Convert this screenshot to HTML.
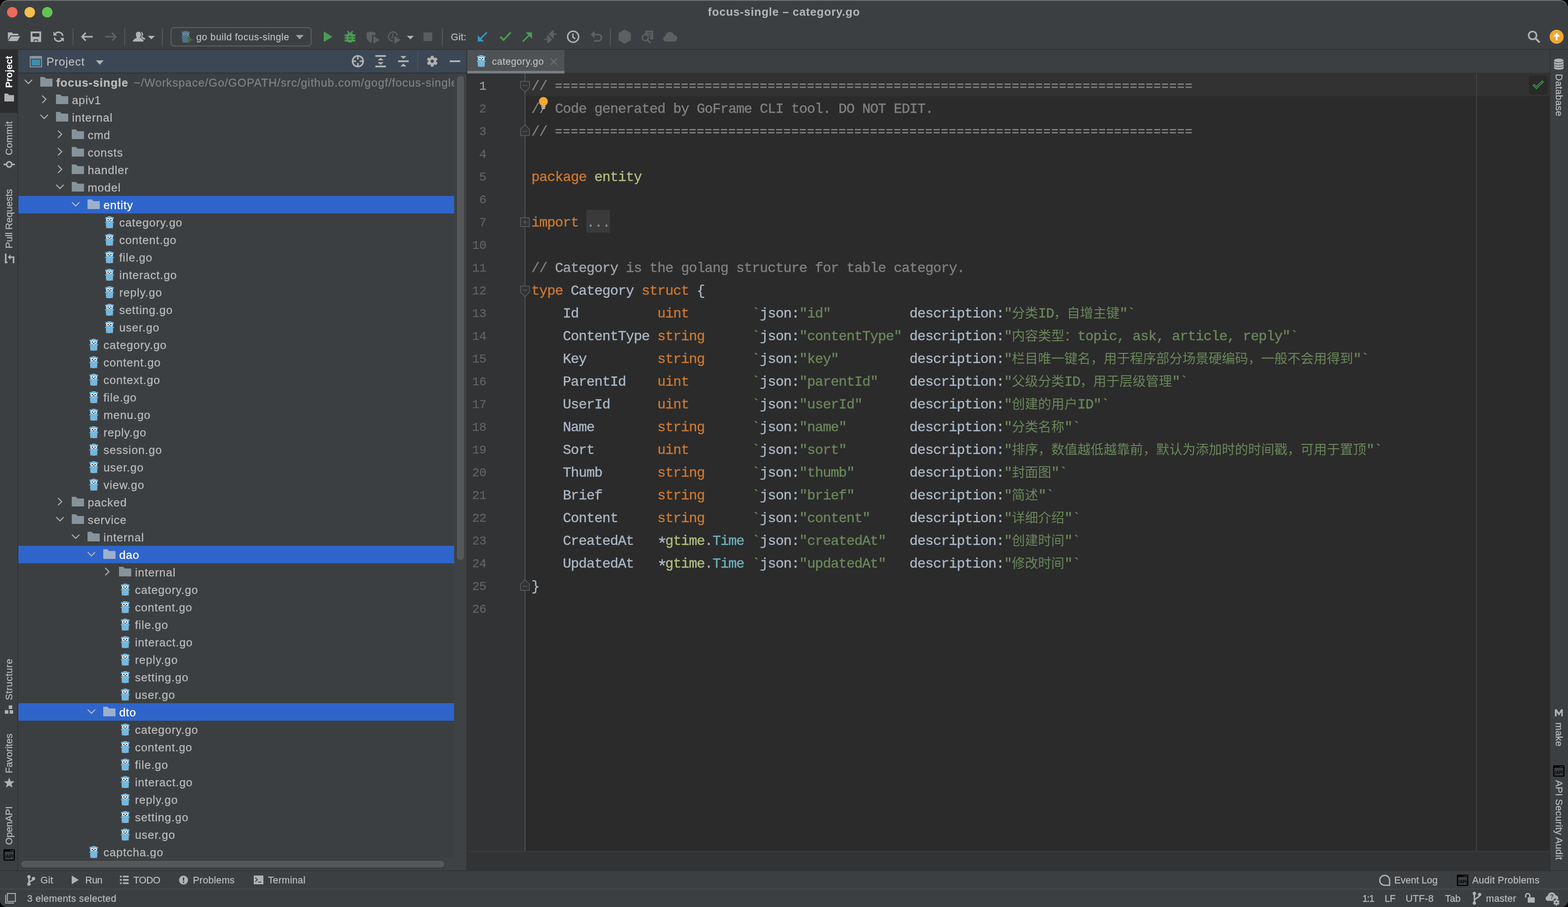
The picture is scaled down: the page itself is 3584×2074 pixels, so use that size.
<!DOCTYPE html>
<html><head><meta charset="utf-8"><title>focus-single – category.go</title>
<style>
html,body{margin:0;padding:0;background:#000;}
body{width:3584px;height:2074px;overflow:hidden;position:relative;font-family:"Liberation Sans",sans-serif;}
#win{position:absolute;left:0;top:0;width:3584px;height:2074px;background:#3C3F41;border-radius:20px 20px 15px 15px;overflow:hidden;box-shadow:inset 0 2px 0 0 #6E7072;will-change:transform;}
#win div,#win svg{position:absolute;}
.t{white-space:pre;color:#BBBBBB;font-size:26px;letter-spacing:1.0px;-webkit-text-stroke-width:0.3px;}
.s{font-size:22px;letter-spacing:0.35px;}
.b{font-weight:bold;}
.m{font-family:"Liberation Mono",monospace;font-size:32px;letter-spacing:-1.2px;color:#A9B7C6;-webkit-text-stroke-width:0.45px;}
.ln{font-family:"Liberation Mono",monospace;font-size:28px;letter-spacing:-0.6px;color:#606366;text-align:right;width:60px;}
.k{color:#CC7832} .c{color:#808080} .g{color:#6A8759} .p{color:#AFBF7E} .y{color:#6FAFBD} .d{color:#A9B7C6} .dc{color:#A1A7AE}
.cj{font-family:"Liberation Mono","Noto Sans CJK SC",monospace;font-size:30px;letter-spacing:0;color:#6A8759;-webkit-text-stroke-width:0;}
.rot{transform-origin:0 0;transform:rotate(90deg);}
.rotl{transform-origin:0 0;transform:rotate(-90deg);}
.code svg{position:static !important;display:inline-block;vertical-align:top;}
</style></head><body><div id="win">
<div style="left:16px;top:16px;width:24px;height:24px;background:#ED6A5E;border-radius:50%;"></div>
<div style="left:56px;top:16px;width:24px;height:24px;background:#F4BF4F;border-radius:50%;"></div>
<div style="left:96px;top:16px;width:24px;height:24px;background:#61C554;border-radius:50%;"></div>
<div class="t b" style="left:0px;top:8.5px;height:36px;line-height:36px;width:3584px;text-align:center;letter-spacing:0.78px;color:#B4B6B8;-webkit-text-stroke-width:0;">focus-single – category.go</div>
<svg style="left:17px;top:73px;" width="30" height="22" viewBox="0 0 30 22"><path d="M1 1H10L13 4H25V8H7L1 19Z" fill="#AFB1B3"/><path d="M8.5 10H29L22.5 21H1.5Z" fill="#AFB1B3"/></svg>
<svg style="left:69px;top:72px;" width="26" height="25" viewBox="0 0 26 25"><path fill-rule="evenodd" d="M1 0H25V24H1ZM5 4V12H21V4ZM8 18V24H18V18Z" fill="#AFB1B3"/><rect x="9.5" y="20" width="7" height="4" fill="#AFB1B3"/></svg>
<svg style="left:121px;top:71px;" width="26" height="26" viewBox="0 0 26 26"><path d="M22.5 11A9.8 9.8 0 0 0 4.6 7.2" fill="none" stroke="#AFB1B3" stroke-width="3.4"/><path d="M1 1.5V10.5H10Z" fill="#AFB1B3"/><path d="M3.5 15A9.8 9.8 0 0 0 21.4 18.8" fill="none" stroke="#AFB1B3" stroke-width="3.4"/><path d="M25 24.5V15.5H16Z" fill="#AFB1B3"/></svg>
<div style="left:166px;top:64px;width:2px;height:40px;background:#555555;"></div>
<svg style="left:185px;top:73px;" width="28" height="22" viewBox="0 0 28 22"><path d="M11 2L2.5 11L11 20M3 11H27" fill="none" stroke="#AFB1B3" stroke-width="3.6"/></svg>
<svg style="left:239px;top:73px;" width="28" height="22" viewBox="0 0 28 22"><path d="M17 2L25.5 11L17 20M25 11H1" fill="none" stroke="#5E6060" stroke-width="3.6"/></svg>
<div style="left:284px;top:64px;width:2px;height:40px;background:#555555;"></div>
<svg style="left:303px;top:72px;" width="30" height="24" viewBox="0 0 30 24"><path d="M19 1C22.5 1 24 3.5 24 6.5C24 9 23 10.5 22.3 11.8C23 13.5 29 14 29.5 18H24C23 15 20 14.6 19.3 13.4C20.5 11.6 21 9.5 21 7C21 4.6 20.3 2.8 19 1Z" fill="#AFB1B3"/><path d="M13.5 0.5C17.5 0.5 19.3 3.4 19.3 7C19.3 10 18 12 17.2 13.4C18 16 24.5 16 25.5 23H0.5C1.5 16 8.5 16 9.6 13.4C8.8 12 7.6 10 7.6 7C7.6 3.4 9.5 0.5 13.5 0.5Z" fill="#AFB1B3"/></svg>
<svg style="left:338px;top:82px;" width="16" height="8" viewBox="0 0 16 8"><path d="M0 0H16L8 8Z" fill="#AFB1B3"/></svg>
<div style="left:370px;top:64px;width:2px;height:40px;background:#555555;"></div>
<div style="left:390px;top:62px;width:322px;height:44px;box-sizing:border-box;border:2px solid #5E6162;border-radius:8px;"></div>
<svg style="left:414px;top:70px;" width="21" height="28" viewBox="0 0 21 29"><circle cx="2.8" cy="4.6" r="2.4" fill="#4F738A"/><circle cx="18.2" cy="4.6" r="2.4" fill="#4F738A"/><ellipse cx="1.4" cy="15" rx="1.3" ry="1.6" fill="#6b6560"/><ellipse cx="19.6" cy="15" rx="1.3" ry="1.6" fill="#6b6560"/><ellipse cx="3.8" cy="27" rx="1.6" ry="1.4" fill="#6b6560"/><ellipse cx="17.2" cy="27" rx="1.6" ry="1.4" fill="#6b6560"/><path d="M10.5 0.3C15.2 0.3 18.6 3.2 18.9 7.5C19.1 11 18.4 14 18.7 17.5C19 21 19.4 23.5 18 26C16.6 28 13.5 28.6 10.5 28.6C7.5 28.6 4.4 28 3 26C1.6 23.5 2 21 2.3 17.5C2.6 14 1.9 11 2.1 7.5C2.4 3.2 5.8 0.3 10.5 0.3Z" fill="#4F738A"/><circle cx="7" cy="8.4" r="3.3" fill="#8f9aa3"/><circle cx="14" cy="8.4" r="3.3" fill="#8f9aa3"/><circle cx="7.2" cy="8.5" r="1.35" fill="#2f3a42"/><circle cx="13.8" cy="8.5" r="1.35" fill="#2f3a42"/><rect x="9.5" y="12.2" width="2" height="2.3" rx="0.6" fill="#8f9aa3"/><ellipse cx="10.5" cy="12.4" rx="1.9" ry="1.0" fill="#6b6560"/><ellipse cx="10.5" cy="11.4" rx="1.2" ry="0.9" fill="#2f3a42"/></svg>
<svg style="left:429px;top:84px;" width="12" height="14" viewBox="0 0 12 14"><path d="M0 0L12 7L0 14Z" fill="#3C6E45"/></svg>
<div class="t s" style="left:448.5px;top:63px;height:44px;line-height:44px;letter-spacing:0.58px;">go build focus-single</div>
<svg style="left:675.5px;top:80px;" width="18" height="10" viewBox="0 0 18 10"><path d="M0 0H18L9 10Z" fill="#9C9FA1"/></svg>
<svg style="left:740px;top:72px;" width="20" height="24" viewBox="0 0 20 24"><path d="M0 0L20 12L0 24Z" fill="#499C54"/></svg>
<svg style="left:787px;top:70px;" width="26" height="28" viewBox="0 0 26 28"><path d="M7 1.2L11 6M19 1.2L15 6" stroke="#499C54" stroke-width="3" fill="none"/><path d="M13 4.6C17.6 4.6 20.6 7.6 20.6 12V20C20.6 24.6 17.6 27.6 13 27.6C8.4 27.6 5.4 24.6 5.4 20V12C5.4 7.6 8.4 4.6 13 4.6Z" fill="#499C54"/><rect x="0.8" y="8.6" width="24.4" height="4.2" fill="#499C54"/><rect x="0.8" y="14.6" width="24.4" height="4" fill="#499C54"/><rect x="0.8" y="20.7" width="24.4" height="4.3" fill="#499C54"/><rect x="9.4" y="12.8" width="7.2" height="1.9" fill="#3C3F41"/><rect x="9.4" y="18.7" width="7.2" height="1.9" fill="#3C3F41"/></svg>
<svg style="left:837px;top:72px;" width="32" height="29" viewBox="0 0 32 29"><path d="M1 2.5L11 0L21 2.5V8H13V24.5L11 25.5C5 23 1 19 1 11Z" fill="#5E6060"/><path d="M13 8H15.5V19L13 21Z" fill="#3C3F41"/><path d="M16.5 10.5L31 19.2L16.5 28Z" fill="#5E6060"/></svg>
<svg style="left:885px;top:70px;" width="32" height="31" viewBox="0 0 32 31"><path d="M23.5 10.5A10.6 10.6 0 1 0 13.5 24.2" fill="none" stroke="#5E6060" stroke-width="2.8"/><path d="M13 7V14L9.5 18" fill="none" stroke="#5E6060" stroke-width="2.4"/><path d="M16.5 12.5L31 21.2L16.5 30Z" fill="#5E6060"/></svg>
<svg style="left:930px;top:82px;" width="16" height="8" viewBox="0 0 16 8"><path d="M0 0H16L8 8Z" fill="#AFB1B3"/></svg>
<div style="left:968px;top:74px;width:20px;height:20px;background:#5A5C5D;"></div>
<div style="left:1010px;top:64px;width:2px;height:40px;background:#555555;"></div>
<div class="t s" style="left:1030.5px;top:63px;height:44px;line-height:44px;">Git:</div>
<svg style="left:1091px;top:72px;" width="24" height="24" viewBox="0 0 24 24"><path d="M22 2L5 19" stroke="#3592C4" stroke-width="3.6" fill="none"/><path d="M1 23V8.5L15.5 23Z" fill="#3592C4"/></svg>
<svg style="left:1141px;top:71px;" width="29" height="24" viewBox="0 0 29 24"><path d="M2.5 13L10 20.5L26.5 3" stroke="#499C54" stroke-width="4" fill="none"/></svg>
<svg style="left:1193px;top:73px;" width="24" height="24" viewBox="0 0 24 24"><path d="M2 22L19 5" stroke="#499C54" stroke-width="3.6" fill="none"/><path d="M23 1V15.5L8.5 1Z" fill="#499C54"/></svg>
<svg style="left:1243px;top:69px;" width="30" height="30" viewBox="0 0 30 30"><path d="M29 9H19M21 1.5L13 9L21 16.5Z" fill="#5E6060" stroke="#5E6060" stroke-width="3"/><path d="M1 21H11M9 13.5L17 21L9 28.5Z" fill="#5E6060" stroke="#5E6060" stroke-width="3"/></svg>
<svg style="left:1295px;top:69px;" width="30" height="30" viewBox="0 0 30 30"><circle cx="15" cy="15" r="12.6" fill="none" stroke="#AFB1B3" stroke-width="3.4"/><path d="M14.5 8V16L20 19.5" fill="none" stroke="#AFB1B3" stroke-width="3.2"/></svg>
<svg style="left:1349px;top:70px;" width="29" height="28" viewBox="0 0 29 28"><path d="M1 9L10 0.5V17.5Z" fill="#5E6060"/><path d="M9 9H18.5A7.3 7.3 0 0 1 18.5 23.6H9" fill="none" stroke="#5E6060" stroke-width="3.6"/></svg>
<div style="left:1394px;top:64px;width:2px;height:40px;background:#555555;"></div>
<svg style="left:1413px;top:67px;" width="30" height="34" viewBox="0 0 30 34"><path d="M15 0.5L29 8.5V25L15 33L1 25V8.5Z" fill="#5E6060"/></svg>
<svg style="left:1465px;top:69px;" width="30" height="30" viewBox="0 0 30 30"><path d="M10 1H28V21H21V15L15 9H10Z" fill="#5E6060"/><path d="M14 5.5H25M17 9.5H25M19 13.5H25" stroke="#3C3F41" stroke-width="1.6"/><circle cx="10" cy="17" r="7" fill="#3C3F41" stroke="#5E6060" stroke-width="3.2"/><path d="M15 22.5L22 29.5" stroke="#5E6060" stroke-width="3.6"/></svg>
<svg style="left:1515px;top:72px;" width="34" height="24" viewBox="0 0 34 24"><path d="M8 23C3.5 23 0.8 20 0.8 16.6C0.8 13.4 3.2 11 6.3 10.6C6.8 5 11 1 16.5 1C21.2 1 24.8 4 25.9 8.2C30 8.6 33 11.6 33 15.6C33 19.8 29.8 23 25.5 23Z" fill="#5E6060"/></svg>
<svg style="left:3491px;top:69px;" width="30" height="30" viewBox="0 0 30 30"><circle cx="12" cy="12" r="9" fill="none" stroke="#AFB1B3" stroke-width="3.6"/><path d="M18.5 18.5L28 28" stroke="#AFB1B3" stroke-width="4.4"/></svg>
<div style="left:3542px;top:68px;width:32px;height:32px;background:#F0A732;border-radius:50%;"></div>
<svg style="left:3542px;top:68px;" width="32" height="32" viewBox="0 0 32 32"><path d="M16 7L24 15.5H18V24H14V15.5H8Z" fill="#fff"/></svg>
<div style="left:0px;top:112px;width:3584px;height:2px;background:#323232;"></div>
<div style="left:0px;top:114px;width:40px;height:1876px;background:#3C3F41;"></div>
<div style="left:40px;top:114px;width:2px;height:1876px;background:#323232;"></div>
<div style="left:0px;top:114px;width:40px;height:144px;background:#2B2D2F;"></div>
<div class="t s rotl" style="left:6px;top:200.5px;height:30px;line-height:30px;color:#FFFFFF;font-weight:bold;letter-spacing:-0.2px;-webkit-text-stroke-width:0;">Project</div>
<svg style="left:10px;top:214px;" width="22" height="18" viewBox="0 0 22 18"><path d="M0 0H7.5L11 3.4H22V18H0Z" fill="#AFB1B3"/></svg>
<div class="t s rotl" style="left:6px;top:355px;height:30px;line-height:30px;color:#BBBBBB;">Commit</div>
<svg style="left:8px;top:367px;" width="26" height="18" viewBox="0 0 26 18"><circle cx="13" cy="9" r="6" fill="none" stroke="#AFB1B3" stroke-width="3.4"/><path d="M0 9H7M19 9H26" stroke="#AFB1B3" stroke-width="3.4"/></svg>
<div class="t s rotl" style="left:6px;top:568px;height:30px;line-height:30px;color:#BBBBBB;letter-spacing:0px;">Pull Requests</div>
<svg style="left:11px;top:580px;" width="22" height="22" viewBox="0 0 22 22"><path d="M2 0V22" stroke="#AFB1B3" stroke-width="3.6"/><path d="M7 8L13 2V14Z" fill="#AFB1B3"/><path d="M11 8H20V22" fill="none" stroke="#AFB1B3" stroke-width="3.6"/><path d="M0 20H6" stroke="#AFB1B3" stroke-width="3.6"/></svg>
<div class="t s rotl" style="left:6px;top:1601px;height:30px;line-height:30px;color:#BBBBBB;letter-spacing:0.65px;">Structure</div>
<svg style="left:11px;top:1613px;" width="20" height="20" viewBox="0 0 20 20"><rect x="0" y="11" width="8" height="8" fill="#AFB1B3"/><rect x="11" y="11" width="8" height="8" fill="#AFB1B3"/><rect x="9" y="0" width="8" height="8" fill="#AFB1B3"/></svg>
<div class="t s rotl" style="left:6px;top:1768px;height:30px;line-height:30px;color:#BBBBBB;letter-spacing:0px;">Favorites</div>
<svg style="left:9px;top:1778px;" width="24" height="24" viewBox="0 0 24 24"><path d="M12 0L15.2 8.2L24 8.8L17.2 14.4L19.4 23L12 18.2L4.6 23L6.8 14.4L0 8.8L8.8 8.2Z" fill="#AFB1B3"/></svg>
<div class="t s rotl" style="left:6px;top:1932px;height:30px;line-height:30px;color:#BBBBBB;letter-spacing:-0.2px;">OpenAPI</div>
<svg style="left:8px;top:1942px;" width="26" height="26" viewBox="0 0 26 26"><rect x="1.3" y="1.3" width="23.4" height="23.4" rx="1.5" fill="#3C3F41" stroke="#000" stroke-width="2.6"/><rect x="0.5" y="0.5" width="25" height="5" fill="#000"/><rect x="15.5" y="2" width="1.8" height="1.8" fill="#6a6a6a"/><rect x="18.7" y="2" width="1.8" height="1.8" fill="#6a6a6a"/><rect x="21.9" y="2" width="1.8" height="1.8" fill="#6a6a6a"/><text x="3.6" y="20.3" font-family="Liberation Sans, sans-serif" font-weight="bold" font-size="10.2" fill="#000" textLength="18.8" lengthAdjust="spacingAndGlyphs">/API</text></svg>
<div style="left:42px;top:114px;width:1024px;height:52px;background:#3B4754;"></div>
<div style="left:42px;top:166px;width:1024px;height:2px;background:#2E3033;"></div>
<svg style="left:68px;top:128px;" width="28" height="26" viewBox="0 0 28 26"><rect x="0" y="0" width="28" height="26" fill="#8A97A1"/><rect x="2.1" y="6.1" width="23.8" height="17.8" fill="#3B4754"/><rect x="4.1" y="8.1" width="19.8" height="13.8" fill="#3D8CB1"/></svg>
<div class="t " style="left:106.3px;top:120.7px;height:40px;line-height:40px;letter-spacing:0.95px;">Project</div>
<svg style="left:219.2px;top:138px;" width="18" height="10" viewBox="0 0 18 10"><path d="M0 0H18L9 10Z" fill="#AFB1B3"/></svg>
<svg style="left:804px;top:126px;" width="28" height="28" viewBox="0 0 28 28"><circle cx="14" cy="14" r="12.2" fill="none" stroke="#AFB1B3" stroke-width="3.6"/><path d="M14 1V10M14 18V27M1 14H10M18 14H27" stroke="#AFB1B3" stroke-width="3.6"/></svg>
<svg style="left:858px;top:126px;" width="24" height="28" viewBox="0 0 24 28"><rect x="0" y="0" width="24" height="4" fill="#AFB1B3"/><rect x="0" y="24" width="24" height="4" fill="#AFB1B3"/><path d="M5 12L12 6L19 12ZM5 16.2L12 22.2L19 16.2Z" fill="#AFB1B3"/></svg>
<svg style="left:910px;top:126px;" width="24" height="28" viewBox="0 0 24 28"><rect x="0" y="12" width="24" height="4.1" fill="#AFB1B3"/><path d="M5 2L12 8.8L19 2ZM5 26.1L12 19.2L19 26.1Z" fill="#AFB1B3"/></svg>
<div style="left:954px;top:120px;width:2px;height:40px;background:#55524F;"></div>
<svg style="left:975px;top:127px;" width="26" height="26" viewBox="0 0 26 26"><path fill-rule="evenodd" d="M9.7 4.9L10.3 1.0L15.7 1.0L16.3 4.9L18.4 6.1L22.1 4.7L24.7 9.3L21.6 11.8L21.6 14.2L24.7 16.7L22.1 21.3L18.4 19.9L16.3 21.1L15.7 25.0L10.3 25.0L9.7 21.1L7.6 19.9L3.9 21.3L1.3 16.7L4.4 14.2L4.4 11.8L1.3 9.3L3.9 4.7L7.6 6.1ZM8.9 13a4.1 4.1 0 1 0 8.2 0a4.1 4.1 0 1 0 -8.2 0Z" fill="#AFB1B3" stroke="#AFB1B3" stroke-width="0.8" stroke-linejoin="round"/></svg>
<div style="left:1028px;top:137.5px;width:24px;height:4px;background:#AFB1B3;"></div>
<div style="left:42px;top:168px;width:996px;height:1822px;overflow:hidden;">
<svg style="left:13px;top:13px;" width="20" height="12" viewBox="0 0 20 12"><path d="M1.5 1.5L10 10L18.5 1.5" fill="none" stroke="#AFB1B3" stroke-width="2.4"/></svg>
<svg style="left:50px;top:8px;" width="28" height="22" viewBox="0 0 28 22"><path d="M0 0H9.2L13.6 4H28V22H0Z" fill="#87939A"/></svg>
<div class="t b" style="left:86.4px;top:0px;height:40px;line-height:40px;letter-spacing:1.0px;color:#BBBBBB;top:1px;">focus-single</div>
<div class="t " style="left:263.5px;top:0px;height:40px;line-height:40px;color:#7F8182;top:1px;letter-spacing:1.0px;">~/Workspace/Go/GOPATH/src/github.com/gogf/focus-single</div>
<svg style="left:52.5px;top:49px;" width="12" height="20" viewBox="0 0 12 20"><path d="M1.5 1.5L10 10L1.5 18.5" fill="none" stroke="#AFB1B3" stroke-width="2.4"/></svg>
<svg style="left:86px;top:48px;" width="28" height="22" viewBox="0 0 28 22"><path d="M0 0H9.2L13.6 4H28V22H0Z" fill="#87939A"/></svg>
<div class="t " style="left:122.4px;top:41px;height:40px;line-height:40px;color:#BBBBBB;">apiv1</div>
<svg style="left:49px;top:93px;" width="20" height="12" viewBox="0 0 20 12"><path d="M1.5 1.5L10 10L18.5 1.5" fill="none" stroke="#AFB1B3" stroke-width="2.4"/></svg>
<svg style="left:86px;top:88px;" width="28" height="22" viewBox="0 0 28 22"><path d="M0 0H9.2L13.6 4H28V22H0Z" fill="#87939A"/></svg>
<div class="t " style="left:122.4px;top:81px;height:40px;line-height:40px;color:#BBBBBB;">internal</div>
<svg style="left:88.5px;top:129px;" width="12" height="20" viewBox="0 0 12 20"><path d="M1.5 1.5L10 10L1.5 18.5" fill="none" stroke="#AFB1B3" stroke-width="2.4"/></svg>
<svg style="left:122px;top:128px;" width="28" height="22" viewBox="0 0 28 22"><path d="M0 0H9.2L13.6 4H28V22H0Z" fill="#87939A"/></svg>
<div class="t " style="left:158.4px;top:121px;height:40px;line-height:40px;color:#BBBBBB;">cmd</div>
<svg style="left:88.5px;top:169px;" width="12" height="20" viewBox="0 0 12 20"><path d="M1.5 1.5L10 10L1.5 18.5" fill="none" stroke="#AFB1B3" stroke-width="2.4"/></svg>
<svg style="left:122px;top:168px;" width="28" height="22" viewBox="0 0 28 22"><path d="M0 0H9.2L13.6 4H28V22H0Z" fill="#87939A"/></svg>
<div class="t " style="left:158.4px;top:161px;height:40px;line-height:40px;color:#BBBBBB;">consts</div>
<svg style="left:88.5px;top:209px;" width="12" height="20" viewBox="0 0 12 20"><path d="M1.5 1.5L10 10L1.5 18.5" fill="none" stroke="#AFB1B3" stroke-width="2.4"/></svg>
<svg style="left:122px;top:208px;" width="28" height="22" viewBox="0 0 28 22"><path d="M0 0H9.2L13.6 4H28V22H0Z" fill="#87939A"/></svg>
<div class="t " style="left:158.4px;top:201px;height:40px;line-height:40px;color:#BBBBBB;">handler</div>
<svg style="left:85px;top:253px;" width="20" height="12" viewBox="0 0 20 12"><path d="M1.5 1.5L10 10L18.5 1.5" fill="none" stroke="#AFB1B3" stroke-width="2.4"/></svg>
<svg style="left:122px;top:248px;" width="28" height="22" viewBox="0 0 28 22"><path d="M0 0H9.2L13.6 4H28V22H0Z" fill="#87939A"/></svg>
<div class="t " style="left:158.4px;top:241px;height:40px;line-height:40px;color:#BBBBBB;">model</div>
<div style="left:0px;top:280px;width:996px;height:40px;background:#2F65CA;"></div>
<svg style="left:121px;top:293px;" width="20" height="12" viewBox="0 0 20 12"><path d="M1.5 1.5L10 10L18.5 1.5" fill="none" stroke="#B4BCC8" stroke-width="2.4"/></svg>
<svg style="left:158px;top:288px;" width="28" height="22" viewBox="0 0 28 22"><path d="M0 0H9.2L13.6 4H28V22H0Z" fill="#9CB0CB"/></svg>
<div class="t " style="left:194.4px;top:281px;height:40px;line-height:40px;color:#FFFFFF;">entity</div>
<svg style="left:198px;top:326px;" width="20.5" height="28.5" viewBox="0 0 21 29"><circle cx="2.8" cy="4.6" r="2.4" fill="#73B8E1"/><circle cx="18.2" cy="4.6" r="2.4" fill="#73B8E1"/><ellipse cx="1.4" cy="15" rx="1.3" ry="1.6" fill="#C69A7B"/><ellipse cx="19.6" cy="15" rx="1.3" ry="1.6" fill="#C69A7B"/><ellipse cx="3.8" cy="27" rx="1.6" ry="1.4" fill="#C69A7B"/><ellipse cx="17.2" cy="27" rx="1.6" ry="1.4" fill="#C69A7B"/><path d="M10.5 0.3C15.2 0.3 18.6 3.2 18.9 7.5C19.1 11 18.4 14 18.7 17.5C19 21 19.4 23.5 18 26C16.6 28 13.5 28.6 10.5 28.6C7.5 28.6 4.4 28 3 26C1.6 23.5 2 21 2.3 17.5C2.6 14 1.9 11 2.1 7.5C2.4 3.2 5.8 0.3 10.5 0.3Z" fill="#73B8E1"/><circle cx="7" cy="8.4" r="3.3" fill="#FFFFFF"/><circle cx="14" cy="8.4" r="3.3" fill="#FFFFFF"/><circle cx="7.2" cy="8.5" r="1.35" fill="#000000"/><circle cx="13.8" cy="8.5" r="1.35" fill="#000000"/><rect x="9.5" y="12.2" width="2" height="2.3" rx="0.6" fill="#FFFFFF"/><ellipse cx="10.5" cy="12.4" rx="1.9" ry="1.0" fill="#C69A7B"/><ellipse cx="10.5" cy="11.4" rx="1.2" ry="0.9" fill="#000000"/></svg>
<div class="t " style="left:230.4px;top:321px;height:40px;line-height:40px;color:#BBBBBB;">category.go</div>
<svg style="left:198px;top:366px;" width="20.5" height="28.5" viewBox="0 0 21 29"><circle cx="2.8" cy="4.6" r="2.4" fill="#73B8E1"/><circle cx="18.2" cy="4.6" r="2.4" fill="#73B8E1"/><ellipse cx="1.4" cy="15" rx="1.3" ry="1.6" fill="#C69A7B"/><ellipse cx="19.6" cy="15" rx="1.3" ry="1.6" fill="#C69A7B"/><ellipse cx="3.8" cy="27" rx="1.6" ry="1.4" fill="#C69A7B"/><ellipse cx="17.2" cy="27" rx="1.6" ry="1.4" fill="#C69A7B"/><path d="M10.5 0.3C15.2 0.3 18.6 3.2 18.9 7.5C19.1 11 18.4 14 18.7 17.5C19 21 19.4 23.5 18 26C16.6 28 13.5 28.6 10.5 28.6C7.5 28.6 4.4 28 3 26C1.6 23.5 2 21 2.3 17.5C2.6 14 1.9 11 2.1 7.5C2.4 3.2 5.8 0.3 10.5 0.3Z" fill="#73B8E1"/><circle cx="7" cy="8.4" r="3.3" fill="#FFFFFF"/><circle cx="14" cy="8.4" r="3.3" fill="#FFFFFF"/><circle cx="7.2" cy="8.5" r="1.35" fill="#000000"/><circle cx="13.8" cy="8.5" r="1.35" fill="#000000"/><rect x="9.5" y="12.2" width="2" height="2.3" rx="0.6" fill="#FFFFFF"/><ellipse cx="10.5" cy="12.4" rx="1.9" ry="1.0" fill="#C69A7B"/><ellipse cx="10.5" cy="11.4" rx="1.2" ry="0.9" fill="#000000"/></svg>
<div class="t " style="left:230.4px;top:361px;height:40px;line-height:40px;color:#BBBBBB;">content.go</div>
<svg style="left:198px;top:406px;" width="20.5" height="28.5" viewBox="0 0 21 29"><circle cx="2.8" cy="4.6" r="2.4" fill="#73B8E1"/><circle cx="18.2" cy="4.6" r="2.4" fill="#73B8E1"/><ellipse cx="1.4" cy="15" rx="1.3" ry="1.6" fill="#C69A7B"/><ellipse cx="19.6" cy="15" rx="1.3" ry="1.6" fill="#C69A7B"/><ellipse cx="3.8" cy="27" rx="1.6" ry="1.4" fill="#C69A7B"/><ellipse cx="17.2" cy="27" rx="1.6" ry="1.4" fill="#C69A7B"/><path d="M10.5 0.3C15.2 0.3 18.6 3.2 18.9 7.5C19.1 11 18.4 14 18.7 17.5C19 21 19.4 23.5 18 26C16.6 28 13.5 28.6 10.5 28.6C7.5 28.6 4.4 28 3 26C1.6 23.5 2 21 2.3 17.5C2.6 14 1.9 11 2.1 7.5C2.4 3.2 5.8 0.3 10.5 0.3Z" fill="#73B8E1"/><circle cx="7" cy="8.4" r="3.3" fill="#FFFFFF"/><circle cx="14" cy="8.4" r="3.3" fill="#FFFFFF"/><circle cx="7.2" cy="8.5" r="1.35" fill="#000000"/><circle cx="13.8" cy="8.5" r="1.35" fill="#000000"/><rect x="9.5" y="12.2" width="2" height="2.3" rx="0.6" fill="#FFFFFF"/><ellipse cx="10.5" cy="12.4" rx="1.9" ry="1.0" fill="#C69A7B"/><ellipse cx="10.5" cy="11.4" rx="1.2" ry="0.9" fill="#000000"/></svg>
<div class="t " style="left:230.4px;top:401px;height:40px;line-height:40px;color:#BBBBBB;">file.go</div>
<svg style="left:198px;top:446px;" width="20.5" height="28.5" viewBox="0 0 21 29"><circle cx="2.8" cy="4.6" r="2.4" fill="#73B8E1"/><circle cx="18.2" cy="4.6" r="2.4" fill="#73B8E1"/><ellipse cx="1.4" cy="15" rx="1.3" ry="1.6" fill="#C69A7B"/><ellipse cx="19.6" cy="15" rx="1.3" ry="1.6" fill="#C69A7B"/><ellipse cx="3.8" cy="27" rx="1.6" ry="1.4" fill="#C69A7B"/><ellipse cx="17.2" cy="27" rx="1.6" ry="1.4" fill="#C69A7B"/><path d="M10.5 0.3C15.2 0.3 18.6 3.2 18.9 7.5C19.1 11 18.4 14 18.7 17.5C19 21 19.4 23.5 18 26C16.6 28 13.5 28.6 10.5 28.6C7.5 28.6 4.4 28 3 26C1.6 23.5 2 21 2.3 17.5C2.6 14 1.9 11 2.1 7.5C2.4 3.2 5.8 0.3 10.5 0.3Z" fill="#73B8E1"/><circle cx="7" cy="8.4" r="3.3" fill="#FFFFFF"/><circle cx="14" cy="8.4" r="3.3" fill="#FFFFFF"/><circle cx="7.2" cy="8.5" r="1.35" fill="#000000"/><circle cx="13.8" cy="8.5" r="1.35" fill="#000000"/><rect x="9.5" y="12.2" width="2" height="2.3" rx="0.6" fill="#FFFFFF"/><ellipse cx="10.5" cy="12.4" rx="1.9" ry="1.0" fill="#C69A7B"/><ellipse cx="10.5" cy="11.4" rx="1.2" ry="0.9" fill="#000000"/></svg>
<div class="t " style="left:230.4px;top:441px;height:40px;line-height:40px;color:#BBBBBB;">interact.go</div>
<svg style="left:198px;top:486px;" width="20.5" height="28.5" viewBox="0 0 21 29"><circle cx="2.8" cy="4.6" r="2.4" fill="#73B8E1"/><circle cx="18.2" cy="4.6" r="2.4" fill="#73B8E1"/><ellipse cx="1.4" cy="15" rx="1.3" ry="1.6" fill="#C69A7B"/><ellipse cx="19.6" cy="15" rx="1.3" ry="1.6" fill="#C69A7B"/><ellipse cx="3.8" cy="27" rx="1.6" ry="1.4" fill="#C69A7B"/><ellipse cx="17.2" cy="27" rx="1.6" ry="1.4" fill="#C69A7B"/><path d="M10.5 0.3C15.2 0.3 18.6 3.2 18.9 7.5C19.1 11 18.4 14 18.7 17.5C19 21 19.4 23.5 18 26C16.6 28 13.5 28.6 10.5 28.6C7.5 28.6 4.4 28 3 26C1.6 23.5 2 21 2.3 17.5C2.6 14 1.9 11 2.1 7.5C2.4 3.2 5.8 0.3 10.5 0.3Z" fill="#73B8E1"/><circle cx="7" cy="8.4" r="3.3" fill="#FFFFFF"/><circle cx="14" cy="8.4" r="3.3" fill="#FFFFFF"/><circle cx="7.2" cy="8.5" r="1.35" fill="#000000"/><circle cx="13.8" cy="8.5" r="1.35" fill="#000000"/><rect x="9.5" y="12.2" width="2" height="2.3" rx="0.6" fill="#FFFFFF"/><ellipse cx="10.5" cy="12.4" rx="1.9" ry="1.0" fill="#C69A7B"/><ellipse cx="10.5" cy="11.4" rx="1.2" ry="0.9" fill="#000000"/></svg>
<div class="t " style="left:230.4px;top:481px;height:40px;line-height:40px;color:#BBBBBB;">reply.go</div>
<svg style="left:198px;top:526px;" width="20.5" height="28.5" viewBox="0 0 21 29"><circle cx="2.8" cy="4.6" r="2.4" fill="#73B8E1"/><circle cx="18.2" cy="4.6" r="2.4" fill="#73B8E1"/><ellipse cx="1.4" cy="15" rx="1.3" ry="1.6" fill="#C69A7B"/><ellipse cx="19.6" cy="15" rx="1.3" ry="1.6" fill="#C69A7B"/><ellipse cx="3.8" cy="27" rx="1.6" ry="1.4" fill="#C69A7B"/><ellipse cx="17.2" cy="27" rx="1.6" ry="1.4" fill="#C69A7B"/><path d="M10.5 0.3C15.2 0.3 18.6 3.2 18.9 7.5C19.1 11 18.4 14 18.7 17.5C19 21 19.4 23.5 18 26C16.6 28 13.5 28.6 10.5 28.6C7.5 28.6 4.4 28 3 26C1.6 23.5 2 21 2.3 17.5C2.6 14 1.9 11 2.1 7.5C2.4 3.2 5.8 0.3 10.5 0.3Z" fill="#73B8E1"/><circle cx="7" cy="8.4" r="3.3" fill="#FFFFFF"/><circle cx="14" cy="8.4" r="3.3" fill="#FFFFFF"/><circle cx="7.2" cy="8.5" r="1.35" fill="#000000"/><circle cx="13.8" cy="8.5" r="1.35" fill="#000000"/><rect x="9.5" y="12.2" width="2" height="2.3" rx="0.6" fill="#FFFFFF"/><ellipse cx="10.5" cy="12.4" rx="1.9" ry="1.0" fill="#C69A7B"/><ellipse cx="10.5" cy="11.4" rx="1.2" ry="0.9" fill="#000000"/></svg>
<div class="t " style="left:230.4px;top:521px;height:40px;line-height:40px;color:#BBBBBB;">setting.go</div>
<svg style="left:198px;top:566px;" width="20.5" height="28.5" viewBox="0 0 21 29"><circle cx="2.8" cy="4.6" r="2.4" fill="#73B8E1"/><circle cx="18.2" cy="4.6" r="2.4" fill="#73B8E1"/><ellipse cx="1.4" cy="15" rx="1.3" ry="1.6" fill="#C69A7B"/><ellipse cx="19.6" cy="15" rx="1.3" ry="1.6" fill="#C69A7B"/><ellipse cx="3.8" cy="27" rx="1.6" ry="1.4" fill="#C69A7B"/><ellipse cx="17.2" cy="27" rx="1.6" ry="1.4" fill="#C69A7B"/><path d="M10.5 0.3C15.2 0.3 18.6 3.2 18.9 7.5C19.1 11 18.4 14 18.7 17.5C19 21 19.4 23.5 18 26C16.6 28 13.5 28.6 10.5 28.6C7.5 28.6 4.4 28 3 26C1.6 23.5 2 21 2.3 17.5C2.6 14 1.9 11 2.1 7.5C2.4 3.2 5.8 0.3 10.5 0.3Z" fill="#73B8E1"/><circle cx="7" cy="8.4" r="3.3" fill="#FFFFFF"/><circle cx="14" cy="8.4" r="3.3" fill="#FFFFFF"/><circle cx="7.2" cy="8.5" r="1.35" fill="#000000"/><circle cx="13.8" cy="8.5" r="1.35" fill="#000000"/><rect x="9.5" y="12.2" width="2" height="2.3" rx="0.6" fill="#FFFFFF"/><ellipse cx="10.5" cy="12.4" rx="1.9" ry="1.0" fill="#C69A7B"/><ellipse cx="10.5" cy="11.4" rx="1.2" ry="0.9" fill="#000000"/></svg>
<div class="t " style="left:230.4px;top:561px;height:40px;line-height:40px;color:#BBBBBB;">user.go</div>
<svg style="left:162px;top:606px;" width="20.5" height="28.5" viewBox="0 0 21 29"><circle cx="2.8" cy="4.6" r="2.4" fill="#73B8E1"/><circle cx="18.2" cy="4.6" r="2.4" fill="#73B8E1"/><ellipse cx="1.4" cy="15" rx="1.3" ry="1.6" fill="#C69A7B"/><ellipse cx="19.6" cy="15" rx="1.3" ry="1.6" fill="#C69A7B"/><ellipse cx="3.8" cy="27" rx="1.6" ry="1.4" fill="#C69A7B"/><ellipse cx="17.2" cy="27" rx="1.6" ry="1.4" fill="#C69A7B"/><path d="M10.5 0.3C15.2 0.3 18.6 3.2 18.9 7.5C19.1 11 18.4 14 18.7 17.5C19 21 19.4 23.5 18 26C16.6 28 13.5 28.6 10.5 28.6C7.5 28.6 4.4 28 3 26C1.6 23.5 2 21 2.3 17.5C2.6 14 1.9 11 2.1 7.5C2.4 3.2 5.8 0.3 10.5 0.3Z" fill="#73B8E1"/><circle cx="7" cy="8.4" r="3.3" fill="#FFFFFF"/><circle cx="14" cy="8.4" r="3.3" fill="#FFFFFF"/><circle cx="7.2" cy="8.5" r="1.35" fill="#000000"/><circle cx="13.8" cy="8.5" r="1.35" fill="#000000"/><rect x="9.5" y="12.2" width="2" height="2.3" rx="0.6" fill="#FFFFFF"/><ellipse cx="10.5" cy="12.4" rx="1.9" ry="1.0" fill="#C69A7B"/><ellipse cx="10.5" cy="11.4" rx="1.2" ry="0.9" fill="#000000"/></svg>
<div class="t " style="left:194.4px;top:601px;height:40px;line-height:40px;color:#BBBBBB;">category.go</div>
<svg style="left:162px;top:646px;" width="20.5" height="28.5" viewBox="0 0 21 29"><circle cx="2.8" cy="4.6" r="2.4" fill="#73B8E1"/><circle cx="18.2" cy="4.6" r="2.4" fill="#73B8E1"/><ellipse cx="1.4" cy="15" rx="1.3" ry="1.6" fill="#C69A7B"/><ellipse cx="19.6" cy="15" rx="1.3" ry="1.6" fill="#C69A7B"/><ellipse cx="3.8" cy="27" rx="1.6" ry="1.4" fill="#C69A7B"/><ellipse cx="17.2" cy="27" rx="1.6" ry="1.4" fill="#C69A7B"/><path d="M10.5 0.3C15.2 0.3 18.6 3.2 18.9 7.5C19.1 11 18.4 14 18.7 17.5C19 21 19.4 23.5 18 26C16.6 28 13.5 28.6 10.5 28.6C7.5 28.6 4.4 28 3 26C1.6 23.5 2 21 2.3 17.5C2.6 14 1.9 11 2.1 7.5C2.4 3.2 5.8 0.3 10.5 0.3Z" fill="#73B8E1"/><circle cx="7" cy="8.4" r="3.3" fill="#FFFFFF"/><circle cx="14" cy="8.4" r="3.3" fill="#FFFFFF"/><circle cx="7.2" cy="8.5" r="1.35" fill="#000000"/><circle cx="13.8" cy="8.5" r="1.35" fill="#000000"/><rect x="9.5" y="12.2" width="2" height="2.3" rx="0.6" fill="#FFFFFF"/><ellipse cx="10.5" cy="12.4" rx="1.9" ry="1.0" fill="#C69A7B"/><ellipse cx="10.5" cy="11.4" rx="1.2" ry="0.9" fill="#000000"/></svg>
<div class="t " style="left:194.4px;top:641px;height:40px;line-height:40px;color:#BBBBBB;">content.go</div>
<svg style="left:162px;top:686px;" width="20.5" height="28.5" viewBox="0 0 21 29"><circle cx="2.8" cy="4.6" r="2.4" fill="#73B8E1"/><circle cx="18.2" cy="4.6" r="2.4" fill="#73B8E1"/><ellipse cx="1.4" cy="15" rx="1.3" ry="1.6" fill="#C69A7B"/><ellipse cx="19.6" cy="15" rx="1.3" ry="1.6" fill="#C69A7B"/><ellipse cx="3.8" cy="27" rx="1.6" ry="1.4" fill="#C69A7B"/><ellipse cx="17.2" cy="27" rx="1.6" ry="1.4" fill="#C69A7B"/><path d="M10.5 0.3C15.2 0.3 18.6 3.2 18.9 7.5C19.1 11 18.4 14 18.7 17.5C19 21 19.4 23.5 18 26C16.6 28 13.5 28.6 10.5 28.6C7.5 28.6 4.4 28 3 26C1.6 23.5 2 21 2.3 17.5C2.6 14 1.9 11 2.1 7.5C2.4 3.2 5.8 0.3 10.5 0.3Z" fill="#73B8E1"/><circle cx="7" cy="8.4" r="3.3" fill="#FFFFFF"/><circle cx="14" cy="8.4" r="3.3" fill="#FFFFFF"/><circle cx="7.2" cy="8.5" r="1.35" fill="#000000"/><circle cx="13.8" cy="8.5" r="1.35" fill="#000000"/><rect x="9.5" y="12.2" width="2" height="2.3" rx="0.6" fill="#FFFFFF"/><ellipse cx="10.5" cy="12.4" rx="1.9" ry="1.0" fill="#C69A7B"/><ellipse cx="10.5" cy="11.4" rx="1.2" ry="0.9" fill="#000000"/></svg>
<div class="t " style="left:194.4px;top:681px;height:40px;line-height:40px;color:#BBBBBB;">context.go</div>
<svg style="left:162px;top:726px;" width="20.5" height="28.5" viewBox="0 0 21 29"><circle cx="2.8" cy="4.6" r="2.4" fill="#73B8E1"/><circle cx="18.2" cy="4.6" r="2.4" fill="#73B8E1"/><ellipse cx="1.4" cy="15" rx="1.3" ry="1.6" fill="#C69A7B"/><ellipse cx="19.6" cy="15" rx="1.3" ry="1.6" fill="#C69A7B"/><ellipse cx="3.8" cy="27" rx="1.6" ry="1.4" fill="#C69A7B"/><ellipse cx="17.2" cy="27" rx="1.6" ry="1.4" fill="#C69A7B"/><path d="M10.5 0.3C15.2 0.3 18.6 3.2 18.9 7.5C19.1 11 18.4 14 18.7 17.5C19 21 19.4 23.5 18 26C16.6 28 13.5 28.6 10.5 28.6C7.5 28.6 4.4 28 3 26C1.6 23.5 2 21 2.3 17.5C2.6 14 1.9 11 2.1 7.5C2.4 3.2 5.8 0.3 10.5 0.3Z" fill="#73B8E1"/><circle cx="7" cy="8.4" r="3.3" fill="#FFFFFF"/><circle cx="14" cy="8.4" r="3.3" fill="#FFFFFF"/><circle cx="7.2" cy="8.5" r="1.35" fill="#000000"/><circle cx="13.8" cy="8.5" r="1.35" fill="#000000"/><rect x="9.5" y="12.2" width="2" height="2.3" rx="0.6" fill="#FFFFFF"/><ellipse cx="10.5" cy="12.4" rx="1.9" ry="1.0" fill="#C69A7B"/><ellipse cx="10.5" cy="11.4" rx="1.2" ry="0.9" fill="#000000"/></svg>
<div class="t " style="left:194.4px;top:721px;height:40px;line-height:40px;color:#BBBBBB;">file.go</div>
<svg style="left:162px;top:766px;" width="20.5" height="28.5" viewBox="0 0 21 29"><circle cx="2.8" cy="4.6" r="2.4" fill="#73B8E1"/><circle cx="18.2" cy="4.6" r="2.4" fill="#73B8E1"/><ellipse cx="1.4" cy="15" rx="1.3" ry="1.6" fill="#C69A7B"/><ellipse cx="19.6" cy="15" rx="1.3" ry="1.6" fill="#C69A7B"/><ellipse cx="3.8" cy="27" rx="1.6" ry="1.4" fill="#C69A7B"/><ellipse cx="17.2" cy="27" rx="1.6" ry="1.4" fill="#C69A7B"/><path d="M10.5 0.3C15.2 0.3 18.6 3.2 18.9 7.5C19.1 11 18.4 14 18.7 17.5C19 21 19.4 23.5 18 26C16.6 28 13.5 28.6 10.5 28.6C7.5 28.6 4.4 28 3 26C1.6 23.5 2 21 2.3 17.5C2.6 14 1.9 11 2.1 7.5C2.4 3.2 5.8 0.3 10.5 0.3Z" fill="#73B8E1"/><circle cx="7" cy="8.4" r="3.3" fill="#FFFFFF"/><circle cx="14" cy="8.4" r="3.3" fill="#FFFFFF"/><circle cx="7.2" cy="8.5" r="1.35" fill="#000000"/><circle cx="13.8" cy="8.5" r="1.35" fill="#000000"/><rect x="9.5" y="12.2" width="2" height="2.3" rx="0.6" fill="#FFFFFF"/><ellipse cx="10.5" cy="12.4" rx="1.9" ry="1.0" fill="#C69A7B"/><ellipse cx="10.5" cy="11.4" rx="1.2" ry="0.9" fill="#000000"/></svg>
<div class="t " style="left:194.4px;top:761px;height:40px;line-height:40px;color:#BBBBBB;">menu.go</div>
<svg style="left:162px;top:806px;" width="20.5" height="28.5" viewBox="0 0 21 29"><circle cx="2.8" cy="4.6" r="2.4" fill="#73B8E1"/><circle cx="18.2" cy="4.6" r="2.4" fill="#73B8E1"/><ellipse cx="1.4" cy="15" rx="1.3" ry="1.6" fill="#C69A7B"/><ellipse cx="19.6" cy="15" rx="1.3" ry="1.6" fill="#C69A7B"/><ellipse cx="3.8" cy="27" rx="1.6" ry="1.4" fill="#C69A7B"/><ellipse cx="17.2" cy="27" rx="1.6" ry="1.4" fill="#C69A7B"/><path d="M10.5 0.3C15.2 0.3 18.6 3.2 18.9 7.5C19.1 11 18.4 14 18.7 17.5C19 21 19.4 23.5 18 26C16.6 28 13.5 28.6 10.5 28.6C7.5 28.6 4.4 28 3 26C1.6 23.5 2 21 2.3 17.5C2.6 14 1.9 11 2.1 7.5C2.4 3.2 5.8 0.3 10.5 0.3Z" fill="#73B8E1"/><circle cx="7" cy="8.4" r="3.3" fill="#FFFFFF"/><circle cx="14" cy="8.4" r="3.3" fill="#FFFFFF"/><circle cx="7.2" cy="8.5" r="1.35" fill="#000000"/><circle cx="13.8" cy="8.5" r="1.35" fill="#000000"/><rect x="9.5" y="12.2" width="2" height="2.3" rx="0.6" fill="#FFFFFF"/><ellipse cx="10.5" cy="12.4" rx="1.9" ry="1.0" fill="#C69A7B"/><ellipse cx="10.5" cy="11.4" rx="1.2" ry="0.9" fill="#000000"/></svg>
<div class="t " style="left:194.4px;top:801px;height:40px;line-height:40px;color:#BBBBBB;">reply.go</div>
<svg style="left:162px;top:846px;" width="20.5" height="28.5" viewBox="0 0 21 29"><circle cx="2.8" cy="4.6" r="2.4" fill="#73B8E1"/><circle cx="18.2" cy="4.6" r="2.4" fill="#73B8E1"/><ellipse cx="1.4" cy="15" rx="1.3" ry="1.6" fill="#C69A7B"/><ellipse cx="19.6" cy="15" rx="1.3" ry="1.6" fill="#C69A7B"/><ellipse cx="3.8" cy="27" rx="1.6" ry="1.4" fill="#C69A7B"/><ellipse cx="17.2" cy="27" rx="1.6" ry="1.4" fill="#C69A7B"/><path d="M10.5 0.3C15.2 0.3 18.6 3.2 18.9 7.5C19.1 11 18.4 14 18.7 17.5C19 21 19.4 23.5 18 26C16.6 28 13.5 28.6 10.5 28.6C7.5 28.6 4.4 28 3 26C1.6 23.5 2 21 2.3 17.5C2.6 14 1.9 11 2.1 7.5C2.4 3.2 5.8 0.3 10.5 0.3Z" fill="#73B8E1"/><circle cx="7" cy="8.4" r="3.3" fill="#FFFFFF"/><circle cx="14" cy="8.4" r="3.3" fill="#FFFFFF"/><circle cx="7.2" cy="8.5" r="1.35" fill="#000000"/><circle cx="13.8" cy="8.5" r="1.35" fill="#000000"/><rect x="9.5" y="12.2" width="2" height="2.3" rx="0.6" fill="#FFFFFF"/><ellipse cx="10.5" cy="12.4" rx="1.9" ry="1.0" fill="#C69A7B"/><ellipse cx="10.5" cy="11.4" rx="1.2" ry="0.9" fill="#000000"/></svg>
<div class="t " style="left:194.4px;top:841px;height:40px;line-height:40px;color:#BBBBBB;">session.go</div>
<svg style="left:162px;top:886px;" width="20.5" height="28.5" viewBox="0 0 21 29"><circle cx="2.8" cy="4.6" r="2.4" fill="#73B8E1"/><circle cx="18.2" cy="4.6" r="2.4" fill="#73B8E1"/><ellipse cx="1.4" cy="15" rx="1.3" ry="1.6" fill="#C69A7B"/><ellipse cx="19.6" cy="15" rx="1.3" ry="1.6" fill="#C69A7B"/><ellipse cx="3.8" cy="27" rx="1.6" ry="1.4" fill="#C69A7B"/><ellipse cx="17.2" cy="27" rx="1.6" ry="1.4" fill="#C69A7B"/><path d="M10.5 0.3C15.2 0.3 18.6 3.2 18.9 7.5C19.1 11 18.4 14 18.7 17.5C19 21 19.4 23.5 18 26C16.6 28 13.5 28.6 10.5 28.6C7.5 28.6 4.4 28 3 26C1.6 23.5 2 21 2.3 17.5C2.6 14 1.9 11 2.1 7.5C2.4 3.2 5.8 0.3 10.5 0.3Z" fill="#73B8E1"/><circle cx="7" cy="8.4" r="3.3" fill="#FFFFFF"/><circle cx="14" cy="8.4" r="3.3" fill="#FFFFFF"/><circle cx="7.2" cy="8.5" r="1.35" fill="#000000"/><circle cx="13.8" cy="8.5" r="1.35" fill="#000000"/><rect x="9.5" y="12.2" width="2" height="2.3" rx="0.6" fill="#FFFFFF"/><ellipse cx="10.5" cy="12.4" rx="1.9" ry="1.0" fill="#C69A7B"/><ellipse cx="10.5" cy="11.4" rx="1.2" ry="0.9" fill="#000000"/></svg>
<div class="t " style="left:194.4px;top:881px;height:40px;line-height:40px;color:#BBBBBB;">user.go</div>
<svg style="left:162px;top:926px;" width="20.5" height="28.5" viewBox="0 0 21 29"><circle cx="2.8" cy="4.6" r="2.4" fill="#73B8E1"/><circle cx="18.2" cy="4.6" r="2.4" fill="#73B8E1"/><ellipse cx="1.4" cy="15" rx="1.3" ry="1.6" fill="#C69A7B"/><ellipse cx="19.6" cy="15" rx="1.3" ry="1.6" fill="#C69A7B"/><ellipse cx="3.8" cy="27" rx="1.6" ry="1.4" fill="#C69A7B"/><ellipse cx="17.2" cy="27" rx="1.6" ry="1.4" fill="#C69A7B"/><path d="M10.5 0.3C15.2 0.3 18.6 3.2 18.9 7.5C19.1 11 18.4 14 18.7 17.5C19 21 19.4 23.5 18 26C16.6 28 13.5 28.6 10.5 28.6C7.5 28.6 4.4 28 3 26C1.6 23.5 2 21 2.3 17.5C2.6 14 1.9 11 2.1 7.5C2.4 3.2 5.8 0.3 10.5 0.3Z" fill="#73B8E1"/><circle cx="7" cy="8.4" r="3.3" fill="#FFFFFF"/><circle cx="14" cy="8.4" r="3.3" fill="#FFFFFF"/><circle cx="7.2" cy="8.5" r="1.35" fill="#000000"/><circle cx="13.8" cy="8.5" r="1.35" fill="#000000"/><rect x="9.5" y="12.2" width="2" height="2.3" rx="0.6" fill="#FFFFFF"/><ellipse cx="10.5" cy="12.4" rx="1.9" ry="1.0" fill="#C69A7B"/><ellipse cx="10.5" cy="11.4" rx="1.2" ry="0.9" fill="#000000"/></svg>
<div class="t " style="left:194.4px;top:921px;height:40px;line-height:40px;color:#BBBBBB;">view.go</div>
<svg style="left:88.5px;top:969px;" width="12" height="20" viewBox="0 0 12 20"><path d="M1.5 1.5L10 10L1.5 18.5" fill="none" stroke="#AFB1B3" stroke-width="2.4"/></svg>
<svg style="left:122px;top:968px;" width="28" height="22" viewBox="0 0 28 22"><path d="M0 0H9.2L13.6 4H28V22H0Z" fill="#87939A"/></svg>
<div class="t " style="left:158.4px;top:961px;height:40px;line-height:40px;color:#BBBBBB;">packed</div>
<svg style="left:85px;top:1013px;" width="20" height="12" viewBox="0 0 20 12"><path d="M1.5 1.5L10 10L18.5 1.5" fill="none" stroke="#AFB1B3" stroke-width="2.4"/></svg>
<svg style="left:122px;top:1008px;" width="28" height="22" viewBox="0 0 28 22"><path d="M0 0H9.2L13.6 4H28V22H0Z" fill="#87939A"/></svg>
<div class="t " style="left:158.4px;top:1001px;height:40px;line-height:40px;color:#BBBBBB;">service</div>
<svg style="left:121px;top:1053px;" width="20" height="12" viewBox="0 0 20 12"><path d="M1.5 1.5L10 10L18.5 1.5" fill="none" stroke="#AFB1B3" stroke-width="2.4"/></svg>
<svg style="left:158px;top:1048px;" width="28" height="22" viewBox="0 0 28 22"><path d="M0 0H9.2L13.6 4H28V22H0Z" fill="#87939A"/></svg>
<div class="t " style="left:194.4px;top:1041px;height:40px;line-height:40px;color:#BBBBBB;">internal</div>
<div style="left:0px;top:1080px;width:996px;height:40px;background:#2F65CA;"></div>
<svg style="left:157px;top:1093px;" width="20" height="12" viewBox="0 0 20 12"><path d="M1.5 1.5L10 10L18.5 1.5" fill="none" stroke="#B4BCC8" stroke-width="2.4"/></svg>
<svg style="left:194px;top:1088px;" width="28" height="22" viewBox="0 0 28 22"><path d="M0 0H9.2L13.6 4H28V22H0Z" fill="#9CB0CB"/></svg>
<div class="t " style="left:230.4px;top:1081px;height:40px;line-height:40px;color:#FFFFFF;">dao</div>
<svg style="left:196.5px;top:1129px;" width="12" height="20" viewBox="0 0 12 20"><path d="M1.5 1.5L10 10L1.5 18.5" fill="none" stroke="#AFB1B3" stroke-width="2.4"/></svg>
<svg style="left:230px;top:1128px;" width="28" height="22" viewBox="0 0 28 22"><path d="M0 0H9.2L13.6 4H28V22H0Z" fill="#87939A"/></svg>
<div class="t " style="left:266.4px;top:1121px;height:40px;line-height:40px;color:#BBBBBB;">internal</div>
<svg style="left:234px;top:1166px;" width="20.5" height="28.5" viewBox="0 0 21 29"><circle cx="2.8" cy="4.6" r="2.4" fill="#73B8E1"/><circle cx="18.2" cy="4.6" r="2.4" fill="#73B8E1"/><ellipse cx="1.4" cy="15" rx="1.3" ry="1.6" fill="#C69A7B"/><ellipse cx="19.6" cy="15" rx="1.3" ry="1.6" fill="#C69A7B"/><ellipse cx="3.8" cy="27" rx="1.6" ry="1.4" fill="#C69A7B"/><ellipse cx="17.2" cy="27" rx="1.6" ry="1.4" fill="#C69A7B"/><path d="M10.5 0.3C15.2 0.3 18.6 3.2 18.9 7.5C19.1 11 18.4 14 18.7 17.5C19 21 19.4 23.5 18 26C16.6 28 13.5 28.6 10.5 28.6C7.5 28.6 4.4 28 3 26C1.6 23.5 2 21 2.3 17.5C2.6 14 1.9 11 2.1 7.5C2.4 3.2 5.8 0.3 10.5 0.3Z" fill="#73B8E1"/><circle cx="7" cy="8.4" r="3.3" fill="#FFFFFF"/><circle cx="14" cy="8.4" r="3.3" fill="#FFFFFF"/><circle cx="7.2" cy="8.5" r="1.35" fill="#000000"/><circle cx="13.8" cy="8.5" r="1.35" fill="#000000"/><rect x="9.5" y="12.2" width="2" height="2.3" rx="0.6" fill="#FFFFFF"/><ellipse cx="10.5" cy="12.4" rx="1.9" ry="1.0" fill="#C69A7B"/><ellipse cx="10.5" cy="11.4" rx="1.2" ry="0.9" fill="#000000"/></svg>
<div class="t " style="left:266.4px;top:1161px;height:40px;line-height:40px;color:#BBBBBB;">category.go</div>
<svg style="left:234px;top:1206px;" width="20.5" height="28.5" viewBox="0 0 21 29"><circle cx="2.8" cy="4.6" r="2.4" fill="#73B8E1"/><circle cx="18.2" cy="4.6" r="2.4" fill="#73B8E1"/><ellipse cx="1.4" cy="15" rx="1.3" ry="1.6" fill="#C69A7B"/><ellipse cx="19.6" cy="15" rx="1.3" ry="1.6" fill="#C69A7B"/><ellipse cx="3.8" cy="27" rx="1.6" ry="1.4" fill="#C69A7B"/><ellipse cx="17.2" cy="27" rx="1.6" ry="1.4" fill="#C69A7B"/><path d="M10.5 0.3C15.2 0.3 18.6 3.2 18.9 7.5C19.1 11 18.4 14 18.7 17.5C19 21 19.4 23.5 18 26C16.6 28 13.5 28.6 10.5 28.6C7.5 28.6 4.4 28 3 26C1.6 23.5 2 21 2.3 17.5C2.6 14 1.9 11 2.1 7.5C2.4 3.2 5.8 0.3 10.5 0.3Z" fill="#73B8E1"/><circle cx="7" cy="8.4" r="3.3" fill="#FFFFFF"/><circle cx="14" cy="8.4" r="3.3" fill="#FFFFFF"/><circle cx="7.2" cy="8.5" r="1.35" fill="#000000"/><circle cx="13.8" cy="8.5" r="1.35" fill="#000000"/><rect x="9.5" y="12.2" width="2" height="2.3" rx="0.6" fill="#FFFFFF"/><ellipse cx="10.5" cy="12.4" rx="1.9" ry="1.0" fill="#C69A7B"/><ellipse cx="10.5" cy="11.4" rx="1.2" ry="0.9" fill="#000000"/></svg>
<div class="t " style="left:266.4px;top:1201px;height:40px;line-height:40px;color:#BBBBBB;">content.go</div>
<svg style="left:234px;top:1246px;" width="20.5" height="28.5" viewBox="0 0 21 29"><circle cx="2.8" cy="4.6" r="2.4" fill="#73B8E1"/><circle cx="18.2" cy="4.6" r="2.4" fill="#73B8E1"/><ellipse cx="1.4" cy="15" rx="1.3" ry="1.6" fill="#C69A7B"/><ellipse cx="19.6" cy="15" rx="1.3" ry="1.6" fill="#C69A7B"/><ellipse cx="3.8" cy="27" rx="1.6" ry="1.4" fill="#C69A7B"/><ellipse cx="17.2" cy="27" rx="1.6" ry="1.4" fill="#C69A7B"/><path d="M10.5 0.3C15.2 0.3 18.6 3.2 18.9 7.5C19.1 11 18.4 14 18.7 17.5C19 21 19.4 23.5 18 26C16.6 28 13.5 28.6 10.5 28.6C7.5 28.6 4.4 28 3 26C1.6 23.5 2 21 2.3 17.5C2.6 14 1.9 11 2.1 7.5C2.4 3.2 5.8 0.3 10.5 0.3Z" fill="#73B8E1"/><circle cx="7" cy="8.4" r="3.3" fill="#FFFFFF"/><circle cx="14" cy="8.4" r="3.3" fill="#FFFFFF"/><circle cx="7.2" cy="8.5" r="1.35" fill="#000000"/><circle cx="13.8" cy="8.5" r="1.35" fill="#000000"/><rect x="9.5" y="12.2" width="2" height="2.3" rx="0.6" fill="#FFFFFF"/><ellipse cx="10.5" cy="12.4" rx="1.9" ry="1.0" fill="#C69A7B"/><ellipse cx="10.5" cy="11.4" rx="1.2" ry="0.9" fill="#000000"/></svg>
<div class="t " style="left:266.4px;top:1241px;height:40px;line-height:40px;color:#BBBBBB;">file.go</div>
<svg style="left:234px;top:1286px;" width="20.5" height="28.5" viewBox="0 0 21 29"><circle cx="2.8" cy="4.6" r="2.4" fill="#73B8E1"/><circle cx="18.2" cy="4.6" r="2.4" fill="#73B8E1"/><ellipse cx="1.4" cy="15" rx="1.3" ry="1.6" fill="#C69A7B"/><ellipse cx="19.6" cy="15" rx="1.3" ry="1.6" fill="#C69A7B"/><ellipse cx="3.8" cy="27" rx="1.6" ry="1.4" fill="#C69A7B"/><ellipse cx="17.2" cy="27" rx="1.6" ry="1.4" fill="#C69A7B"/><path d="M10.5 0.3C15.2 0.3 18.6 3.2 18.9 7.5C19.1 11 18.4 14 18.7 17.5C19 21 19.4 23.5 18 26C16.6 28 13.5 28.6 10.5 28.6C7.5 28.6 4.4 28 3 26C1.6 23.5 2 21 2.3 17.5C2.6 14 1.9 11 2.1 7.5C2.4 3.2 5.8 0.3 10.5 0.3Z" fill="#73B8E1"/><circle cx="7" cy="8.4" r="3.3" fill="#FFFFFF"/><circle cx="14" cy="8.4" r="3.3" fill="#FFFFFF"/><circle cx="7.2" cy="8.5" r="1.35" fill="#000000"/><circle cx="13.8" cy="8.5" r="1.35" fill="#000000"/><rect x="9.5" y="12.2" width="2" height="2.3" rx="0.6" fill="#FFFFFF"/><ellipse cx="10.5" cy="12.4" rx="1.9" ry="1.0" fill="#C69A7B"/><ellipse cx="10.5" cy="11.4" rx="1.2" ry="0.9" fill="#000000"/></svg>
<div class="t " style="left:266.4px;top:1281px;height:40px;line-height:40px;color:#BBBBBB;">interact.go</div>
<svg style="left:234px;top:1326px;" width="20.5" height="28.5" viewBox="0 0 21 29"><circle cx="2.8" cy="4.6" r="2.4" fill="#73B8E1"/><circle cx="18.2" cy="4.6" r="2.4" fill="#73B8E1"/><ellipse cx="1.4" cy="15" rx="1.3" ry="1.6" fill="#C69A7B"/><ellipse cx="19.6" cy="15" rx="1.3" ry="1.6" fill="#C69A7B"/><ellipse cx="3.8" cy="27" rx="1.6" ry="1.4" fill="#C69A7B"/><ellipse cx="17.2" cy="27" rx="1.6" ry="1.4" fill="#C69A7B"/><path d="M10.5 0.3C15.2 0.3 18.6 3.2 18.9 7.5C19.1 11 18.4 14 18.7 17.5C19 21 19.4 23.5 18 26C16.6 28 13.5 28.6 10.5 28.6C7.5 28.6 4.4 28 3 26C1.6 23.5 2 21 2.3 17.5C2.6 14 1.9 11 2.1 7.5C2.4 3.2 5.8 0.3 10.5 0.3Z" fill="#73B8E1"/><circle cx="7" cy="8.4" r="3.3" fill="#FFFFFF"/><circle cx="14" cy="8.4" r="3.3" fill="#FFFFFF"/><circle cx="7.2" cy="8.5" r="1.35" fill="#000000"/><circle cx="13.8" cy="8.5" r="1.35" fill="#000000"/><rect x="9.5" y="12.2" width="2" height="2.3" rx="0.6" fill="#FFFFFF"/><ellipse cx="10.5" cy="12.4" rx="1.9" ry="1.0" fill="#C69A7B"/><ellipse cx="10.5" cy="11.4" rx="1.2" ry="0.9" fill="#000000"/></svg>
<div class="t " style="left:266.4px;top:1321px;height:40px;line-height:40px;color:#BBBBBB;">reply.go</div>
<svg style="left:234px;top:1366px;" width="20.5" height="28.5" viewBox="0 0 21 29"><circle cx="2.8" cy="4.6" r="2.4" fill="#73B8E1"/><circle cx="18.2" cy="4.6" r="2.4" fill="#73B8E1"/><ellipse cx="1.4" cy="15" rx="1.3" ry="1.6" fill="#C69A7B"/><ellipse cx="19.6" cy="15" rx="1.3" ry="1.6" fill="#C69A7B"/><ellipse cx="3.8" cy="27" rx="1.6" ry="1.4" fill="#C69A7B"/><ellipse cx="17.2" cy="27" rx="1.6" ry="1.4" fill="#C69A7B"/><path d="M10.5 0.3C15.2 0.3 18.6 3.2 18.9 7.5C19.1 11 18.4 14 18.7 17.5C19 21 19.4 23.5 18 26C16.6 28 13.5 28.6 10.5 28.6C7.5 28.6 4.4 28 3 26C1.6 23.5 2 21 2.3 17.5C2.6 14 1.9 11 2.1 7.5C2.4 3.2 5.8 0.3 10.5 0.3Z" fill="#73B8E1"/><circle cx="7" cy="8.4" r="3.3" fill="#FFFFFF"/><circle cx="14" cy="8.4" r="3.3" fill="#FFFFFF"/><circle cx="7.2" cy="8.5" r="1.35" fill="#000000"/><circle cx="13.8" cy="8.5" r="1.35" fill="#000000"/><rect x="9.5" y="12.2" width="2" height="2.3" rx="0.6" fill="#FFFFFF"/><ellipse cx="10.5" cy="12.4" rx="1.9" ry="1.0" fill="#C69A7B"/><ellipse cx="10.5" cy="11.4" rx="1.2" ry="0.9" fill="#000000"/></svg>
<div class="t " style="left:266.4px;top:1361px;height:40px;line-height:40px;color:#BBBBBB;">setting.go</div>
<svg style="left:234px;top:1406px;" width="20.5" height="28.5" viewBox="0 0 21 29"><circle cx="2.8" cy="4.6" r="2.4" fill="#73B8E1"/><circle cx="18.2" cy="4.6" r="2.4" fill="#73B8E1"/><ellipse cx="1.4" cy="15" rx="1.3" ry="1.6" fill="#C69A7B"/><ellipse cx="19.6" cy="15" rx="1.3" ry="1.6" fill="#C69A7B"/><ellipse cx="3.8" cy="27" rx="1.6" ry="1.4" fill="#C69A7B"/><ellipse cx="17.2" cy="27" rx="1.6" ry="1.4" fill="#C69A7B"/><path d="M10.5 0.3C15.2 0.3 18.6 3.2 18.9 7.5C19.1 11 18.4 14 18.7 17.5C19 21 19.4 23.5 18 26C16.6 28 13.5 28.6 10.5 28.6C7.5 28.6 4.4 28 3 26C1.6 23.5 2 21 2.3 17.5C2.6 14 1.9 11 2.1 7.5C2.4 3.2 5.8 0.3 10.5 0.3Z" fill="#73B8E1"/><circle cx="7" cy="8.4" r="3.3" fill="#FFFFFF"/><circle cx="14" cy="8.4" r="3.3" fill="#FFFFFF"/><circle cx="7.2" cy="8.5" r="1.35" fill="#000000"/><circle cx="13.8" cy="8.5" r="1.35" fill="#000000"/><rect x="9.5" y="12.2" width="2" height="2.3" rx="0.6" fill="#FFFFFF"/><ellipse cx="10.5" cy="12.4" rx="1.9" ry="1.0" fill="#C69A7B"/><ellipse cx="10.5" cy="11.4" rx="1.2" ry="0.9" fill="#000000"/></svg>
<div class="t " style="left:266.4px;top:1401px;height:40px;line-height:40px;color:#BBBBBB;">user.go</div>
<div style="left:0px;top:1440px;width:996px;height:40px;background:#2F65CA;"></div>
<svg style="left:157px;top:1453px;" width="20" height="12" viewBox="0 0 20 12"><path d="M1.5 1.5L10 10L18.5 1.5" fill="none" stroke="#B4BCC8" stroke-width="2.4"/></svg>
<svg style="left:194px;top:1448px;" width="28" height="22" viewBox="0 0 28 22"><path d="M0 0H9.2L13.6 4H28V22H0Z" fill="#9CB0CB"/></svg>
<div class="t " style="left:230.4px;top:1441px;height:40px;line-height:40px;color:#FFFFFF;">dto</div>
<svg style="left:234px;top:1486px;" width="20.5" height="28.5" viewBox="0 0 21 29"><circle cx="2.8" cy="4.6" r="2.4" fill="#73B8E1"/><circle cx="18.2" cy="4.6" r="2.4" fill="#73B8E1"/><ellipse cx="1.4" cy="15" rx="1.3" ry="1.6" fill="#C69A7B"/><ellipse cx="19.6" cy="15" rx="1.3" ry="1.6" fill="#C69A7B"/><ellipse cx="3.8" cy="27" rx="1.6" ry="1.4" fill="#C69A7B"/><ellipse cx="17.2" cy="27" rx="1.6" ry="1.4" fill="#C69A7B"/><path d="M10.5 0.3C15.2 0.3 18.6 3.2 18.9 7.5C19.1 11 18.4 14 18.7 17.5C19 21 19.4 23.5 18 26C16.6 28 13.5 28.6 10.5 28.6C7.5 28.6 4.4 28 3 26C1.6 23.5 2 21 2.3 17.5C2.6 14 1.9 11 2.1 7.5C2.4 3.2 5.8 0.3 10.5 0.3Z" fill="#73B8E1"/><circle cx="7" cy="8.4" r="3.3" fill="#FFFFFF"/><circle cx="14" cy="8.4" r="3.3" fill="#FFFFFF"/><circle cx="7.2" cy="8.5" r="1.35" fill="#000000"/><circle cx="13.8" cy="8.5" r="1.35" fill="#000000"/><rect x="9.5" y="12.2" width="2" height="2.3" rx="0.6" fill="#FFFFFF"/><ellipse cx="10.5" cy="12.4" rx="1.9" ry="1.0" fill="#C69A7B"/><ellipse cx="10.5" cy="11.4" rx="1.2" ry="0.9" fill="#000000"/></svg>
<div class="t " style="left:266.4px;top:1481px;height:40px;line-height:40px;color:#BBBBBB;">category.go</div>
<svg style="left:234px;top:1526px;" width="20.5" height="28.5" viewBox="0 0 21 29"><circle cx="2.8" cy="4.6" r="2.4" fill="#73B8E1"/><circle cx="18.2" cy="4.6" r="2.4" fill="#73B8E1"/><ellipse cx="1.4" cy="15" rx="1.3" ry="1.6" fill="#C69A7B"/><ellipse cx="19.6" cy="15" rx="1.3" ry="1.6" fill="#C69A7B"/><ellipse cx="3.8" cy="27" rx="1.6" ry="1.4" fill="#C69A7B"/><ellipse cx="17.2" cy="27" rx="1.6" ry="1.4" fill="#C69A7B"/><path d="M10.5 0.3C15.2 0.3 18.6 3.2 18.9 7.5C19.1 11 18.4 14 18.7 17.5C19 21 19.4 23.5 18 26C16.6 28 13.5 28.6 10.5 28.6C7.5 28.6 4.4 28 3 26C1.6 23.5 2 21 2.3 17.5C2.6 14 1.9 11 2.1 7.5C2.4 3.2 5.8 0.3 10.5 0.3Z" fill="#73B8E1"/><circle cx="7" cy="8.4" r="3.3" fill="#FFFFFF"/><circle cx="14" cy="8.4" r="3.3" fill="#FFFFFF"/><circle cx="7.2" cy="8.5" r="1.35" fill="#000000"/><circle cx="13.8" cy="8.5" r="1.35" fill="#000000"/><rect x="9.5" y="12.2" width="2" height="2.3" rx="0.6" fill="#FFFFFF"/><ellipse cx="10.5" cy="12.4" rx="1.9" ry="1.0" fill="#C69A7B"/><ellipse cx="10.5" cy="11.4" rx="1.2" ry="0.9" fill="#000000"/></svg>
<div class="t " style="left:266.4px;top:1521px;height:40px;line-height:40px;color:#BBBBBB;">content.go</div>
<svg style="left:234px;top:1566px;" width="20.5" height="28.5" viewBox="0 0 21 29"><circle cx="2.8" cy="4.6" r="2.4" fill="#73B8E1"/><circle cx="18.2" cy="4.6" r="2.4" fill="#73B8E1"/><ellipse cx="1.4" cy="15" rx="1.3" ry="1.6" fill="#C69A7B"/><ellipse cx="19.6" cy="15" rx="1.3" ry="1.6" fill="#C69A7B"/><ellipse cx="3.8" cy="27" rx="1.6" ry="1.4" fill="#C69A7B"/><ellipse cx="17.2" cy="27" rx="1.6" ry="1.4" fill="#C69A7B"/><path d="M10.5 0.3C15.2 0.3 18.6 3.2 18.9 7.5C19.1 11 18.4 14 18.7 17.5C19 21 19.4 23.5 18 26C16.6 28 13.5 28.6 10.5 28.6C7.5 28.6 4.4 28 3 26C1.6 23.5 2 21 2.3 17.5C2.6 14 1.9 11 2.1 7.5C2.4 3.2 5.8 0.3 10.5 0.3Z" fill="#73B8E1"/><circle cx="7" cy="8.4" r="3.3" fill="#FFFFFF"/><circle cx="14" cy="8.4" r="3.3" fill="#FFFFFF"/><circle cx="7.2" cy="8.5" r="1.35" fill="#000000"/><circle cx="13.8" cy="8.5" r="1.35" fill="#000000"/><rect x="9.5" y="12.2" width="2" height="2.3" rx="0.6" fill="#FFFFFF"/><ellipse cx="10.5" cy="12.4" rx="1.9" ry="1.0" fill="#C69A7B"/><ellipse cx="10.5" cy="11.4" rx="1.2" ry="0.9" fill="#000000"/></svg>
<div class="t " style="left:266.4px;top:1561px;height:40px;line-height:40px;color:#BBBBBB;">file.go</div>
<svg style="left:234px;top:1606px;" width="20.5" height="28.5" viewBox="0 0 21 29"><circle cx="2.8" cy="4.6" r="2.4" fill="#73B8E1"/><circle cx="18.2" cy="4.6" r="2.4" fill="#73B8E1"/><ellipse cx="1.4" cy="15" rx="1.3" ry="1.6" fill="#C69A7B"/><ellipse cx="19.6" cy="15" rx="1.3" ry="1.6" fill="#C69A7B"/><ellipse cx="3.8" cy="27" rx="1.6" ry="1.4" fill="#C69A7B"/><ellipse cx="17.2" cy="27" rx="1.6" ry="1.4" fill="#C69A7B"/><path d="M10.5 0.3C15.2 0.3 18.6 3.2 18.9 7.5C19.1 11 18.4 14 18.7 17.5C19 21 19.4 23.5 18 26C16.6 28 13.5 28.6 10.5 28.6C7.5 28.6 4.4 28 3 26C1.6 23.5 2 21 2.3 17.5C2.6 14 1.9 11 2.1 7.5C2.4 3.2 5.8 0.3 10.5 0.3Z" fill="#73B8E1"/><circle cx="7" cy="8.4" r="3.3" fill="#FFFFFF"/><circle cx="14" cy="8.4" r="3.3" fill="#FFFFFF"/><circle cx="7.2" cy="8.5" r="1.35" fill="#000000"/><circle cx="13.8" cy="8.5" r="1.35" fill="#000000"/><rect x="9.5" y="12.2" width="2" height="2.3" rx="0.6" fill="#FFFFFF"/><ellipse cx="10.5" cy="12.4" rx="1.9" ry="1.0" fill="#C69A7B"/><ellipse cx="10.5" cy="11.4" rx="1.2" ry="0.9" fill="#000000"/></svg>
<div class="t " style="left:266.4px;top:1601px;height:40px;line-height:40px;color:#BBBBBB;">interact.go</div>
<svg style="left:234px;top:1646px;" width="20.5" height="28.5" viewBox="0 0 21 29"><circle cx="2.8" cy="4.6" r="2.4" fill="#73B8E1"/><circle cx="18.2" cy="4.6" r="2.4" fill="#73B8E1"/><ellipse cx="1.4" cy="15" rx="1.3" ry="1.6" fill="#C69A7B"/><ellipse cx="19.6" cy="15" rx="1.3" ry="1.6" fill="#C69A7B"/><ellipse cx="3.8" cy="27" rx="1.6" ry="1.4" fill="#C69A7B"/><ellipse cx="17.2" cy="27" rx="1.6" ry="1.4" fill="#C69A7B"/><path d="M10.5 0.3C15.2 0.3 18.6 3.2 18.9 7.5C19.1 11 18.4 14 18.7 17.5C19 21 19.4 23.5 18 26C16.6 28 13.5 28.6 10.5 28.6C7.5 28.6 4.4 28 3 26C1.6 23.5 2 21 2.3 17.5C2.6 14 1.9 11 2.1 7.5C2.4 3.2 5.8 0.3 10.5 0.3Z" fill="#73B8E1"/><circle cx="7" cy="8.4" r="3.3" fill="#FFFFFF"/><circle cx="14" cy="8.4" r="3.3" fill="#FFFFFF"/><circle cx="7.2" cy="8.5" r="1.35" fill="#000000"/><circle cx="13.8" cy="8.5" r="1.35" fill="#000000"/><rect x="9.5" y="12.2" width="2" height="2.3" rx="0.6" fill="#FFFFFF"/><ellipse cx="10.5" cy="12.4" rx="1.9" ry="1.0" fill="#C69A7B"/><ellipse cx="10.5" cy="11.4" rx="1.2" ry="0.9" fill="#000000"/></svg>
<div class="t " style="left:266.4px;top:1641px;height:40px;line-height:40px;color:#BBBBBB;">reply.go</div>
<svg style="left:234px;top:1686px;" width="20.5" height="28.5" viewBox="0 0 21 29"><circle cx="2.8" cy="4.6" r="2.4" fill="#73B8E1"/><circle cx="18.2" cy="4.6" r="2.4" fill="#73B8E1"/><ellipse cx="1.4" cy="15" rx="1.3" ry="1.6" fill="#C69A7B"/><ellipse cx="19.6" cy="15" rx="1.3" ry="1.6" fill="#C69A7B"/><ellipse cx="3.8" cy="27" rx="1.6" ry="1.4" fill="#C69A7B"/><ellipse cx="17.2" cy="27" rx="1.6" ry="1.4" fill="#C69A7B"/><path d="M10.5 0.3C15.2 0.3 18.6 3.2 18.9 7.5C19.1 11 18.4 14 18.7 17.5C19 21 19.4 23.5 18 26C16.6 28 13.5 28.6 10.5 28.6C7.5 28.6 4.4 28 3 26C1.6 23.5 2 21 2.3 17.5C2.6 14 1.9 11 2.1 7.5C2.4 3.2 5.8 0.3 10.5 0.3Z" fill="#73B8E1"/><circle cx="7" cy="8.4" r="3.3" fill="#FFFFFF"/><circle cx="14" cy="8.4" r="3.3" fill="#FFFFFF"/><circle cx="7.2" cy="8.5" r="1.35" fill="#000000"/><circle cx="13.8" cy="8.5" r="1.35" fill="#000000"/><rect x="9.5" y="12.2" width="2" height="2.3" rx="0.6" fill="#FFFFFF"/><ellipse cx="10.5" cy="12.4" rx="1.9" ry="1.0" fill="#C69A7B"/><ellipse cx="10.5" cy="11.4" rx="1.2" ry="0.9" fill="#000000"/></svg>
<div class="t " style="left:266.4px;top:1681px;height:40px;line-height:40px;color:#BBBBBB;">setting.go</div>
<svg style="left:234px;top:1726px;" width="20.5" height="28.5" viewBox="0 0 21 29"><circle cx="2.8" cy="4.6" r="2.4" fill="#73B8E1"/><circle cx="18.2" cy="4.6" r="2.4" fill="#73B8E1"/><ellipse cx="1.4" cy="15" rx="1.3" ry="1.6" fill="#C69A7B"/><ellipse cx="19.6" cy="15" rx="1.3" ry="1.6" fill="#C69A7B"/><ellipse cx="3.8" cy="27" rx="1.6" ry="1.4" fill="#C69A7B"/><ellipse cx="17.2" cy="27" rx="1.6" ry="1.4" fill="#C69A7B"/><path d="M10.5 0.3C15.2 0.3 18.6 3.2 18.9 7.5C19.1 11 18.4 14 18.7 17.5C19 21 19.4 23.5 18 26C16.6 28 13.5 28.6 10.5 28.6C7.5 28.6 4.4 28 3 26C1.6 23.5 2 21 2.3 17.5C2.6 14 1.9 11 2.1 7.5C2.4 3.2 5.8 0.3 10.5 0.3Z" fill="#73B8E1"/><circle cx="7" cy="8.4" r="3.3" fill="#FFFFFF"/><circle cx="14" cy="8.4" r="3.3" fill="#FFFFFF"/><circle cx="7.2" cy="8.5" r="1.35" fill="#000000"/><circle cx="13.8" cy="8.5" r="1.35" fill="#000000"/><rect x="9.5" y="12.2" width="2" height="2.3" rx="0.6" fill="#FFFFFF"/><ellipse cx="10.5" cy="12.4" rx="1.9" ry="1.0" fill="#C69A7B"/><ellipse cx="10.5" cy="11.4" rx="1.2" ry="0.9" fill="#000000"/></svg>
<div class="t " style="left:266.4px;top:1721px;height:40px;line-height:40px;color:#BBBBBB;">user.go</div>
<svg style="left:162px;top:1766px;" width="20.5" height="28.5" viewBox="0 0 21 29"><circle cx="2.8" cy="4.6" r="2.4" fill="#73B8E1"/><circle cx="18.2" cy="4.6" r="2.4" fill="#73B8E1"/><ellipse cx="1.4" cy="15" rx="1.3" ry="1.6" fill="#C69A7B"/><ellipse cx="19.6" cy="15" rx="1.3" ry="1.6" fill="#C69A7B"/><ellipse cx="3.8" cy="27" rx="1.6" ry="1.4" fill="#C69A7B"/><ellipse cx="17.2" cy="27" rx="1.6" ry="1.4" fill="#C69A7B"/><path d="M10.5 0.3C15.2 0.3 18.6 3.2 18.9 7.5C19.1 11 18.4 14 18.7 17.5C19 21 19.4 23.5 18 26C16.6 28 13.5 28.6 10.5 28.6C7.5 28.6 4.4 28 3 26C1.6 23.5 2 21 2.3 17.5C2.6 14 1.9 11 2.1 7.5C2.4 3.2 5.8 0.3 10.5 0.3Z" fill="#73B8E1"/><circle cx="7" cy="8.4" r="3.3" fill="#FFFFFF"/><circle cx="14" cy="8.4" r="3.3" fill="#FFFFFF"/><circle cx="7.2" cy="8.5" r="1.35" fill="#000000"/><circle cx="13.8" cy="8.5" r="1.35" fill="#000000"/><rect x="9.5" y="12.2" width="2" height="2.3" rx="0.6" fill="#FFFFFF"/><ellipse cx="10.5" cy="12.4" rx="1.9" ry="1.0" fill="#C69A7B"/><ellipse cx="10.5" cy="11.4" rx="1.2" ry="0.9" fill="#000000"/></svg>
<div class="t " style="left:194.4px;top:1761px;height:40px;line-height:40px;color:#BBBBBB;">captcha.go</div>
</div>
<div style="left:1038px;top:168px;width:28px;height:1822px;background:#3F4244;"></div>
<div style="left:42px;top:1962px;width:1024px;height:28px;background:#3F4244;"></div>
<div style="left:1042.5px;top:171.5px;width:19px;height:1110px;background:#565759;border-radius:9.5px;box-sizing:border-box;border:1.5px solid #35373A;"></div>
<div style="left:46px;top:1966px;width:972px;height:20px;background:#565759;border-radius:10px;box-sizing:border-box;border:2px solid #35373A;"></div>
<div style="left:1066px;top:114px;width:2px;height:1876px;background:#323232;"></div>
<div style="left:1068px;top:114px;width:2474px;height:52px;background:#3C3F41;"></div>
<div style="left:1068px;top:114px;width:222px;height:52px;background:#4E5254;"></div>
<div style="left:1068px;top:162px;width:222px;height:6px;background:#787D85;"></div>
<svg style="left:1090px;top:125px;" width="20" height="29" viewBox="0 0 21 29"><circle cx="2.8" cy="4.6" r="2.4" fill="#73B8E1"/><circle cx="18.2" cy="4.6" r="2.4" fill="#73B8E1"/><ellipse cx="1.4" cy="15" rx="1.3" ry="1.6" fill="#C69A7B"/><ellipse cx="19.6" cy="15" rx="1.3" ry="1.6" fill="#C69A7B"/><ellipse cx="3.8" cy="27" rx="1.6" ry="1.4" fill="#C69A7B"/><ellipse cx="17.2" cy="27" rx="1.6" ry="1.4" fill="#C69A7B"/><path d="M10.5 0.3C15.2 0.3 18.6 3.2 18.9 7.5C19.1 11 18.4 14 18.7 17.5C19 21 19.4 23.5 18 26C16.6 28 13.5 28.6 10.5 28.6C7.5 28.6 4.4 28 3 26C1.6 23.5 2 21 2.3 17.5C2.6 14 1.9 11 2.1 7.5C2.4 3.2 5.8 0.3 10.5 0.3Z" fill="#73B8E1"/><circle cx="7" cy="8.4" r="3.3" fill="#FFFFFF"/><circle cx="14" cy="8.4" r="3.3" fill="#FFFFFF"/><circle cx="7.2" cy="8.5" r="1.35" fill="#000000"/><circle cx="13.8" cy="8.5" r="1.35" fill="#000000"/><rect x="9.5" y="12.2" width="2" height="2.3" rx="0.6" fill="#FFFFFF"/><ellipse cx="10.5" cy="12.4" rx="1.9" ry="1.0" fill="#C69A7B"/><ellipse cx="10.5" cy="11.4" rx="1.2" ry="0.9" fill="#000000"/></svg>
<div class="t s" style="left:1124.5px;top:116px;height:50px;line-height:50px;letter-spacing:0.5px;">category.go</div>
<svg style="left:1257.5px;top:132.5px;" width="16" height="16" viewBox="0 0 16 16"><path d="M0.7 0.7L15.3 15.3M15.3 0.7L0.7 15.3" stroke="#72787B" stroke-width="1.7"/></svg>
<div style="left:1290px;top:166px;width:2252px;height:2px;background:#323232;"></div>
<div style="left:1068px;top:168px;width:2474px;height:1778px;background:#2B2B2B;"></div>
<div style="left:1068px;top:168px;width:132px;height:1778px;background:#313335;"></div>
<div style="left:1201px;top:168px;width:2341px;height:52px;background:#323232;"></div>
<div style="left:1199px;top:168px;width:2px;height:1778px;background:#555555;"></div>
<div style="left:3374px;top:168px;width:2px;height:1778px;background:#424242;"></div>
<div style="left:1068px;top:1946px;width:2474px;height:44px;background:#313335;"></div>
<div style="left:1068px;top:1946px;width:2474px;height:2px;background:#3A3C3E;"></div>
<div style="left:1340px;top:480px;width:54px;height:52px;background:#3A3A3A;"></div>
<div class="t ln" style="left:1051.5px;top:172px;height:52px;line-height:52px;color:#A4A3A3;">1</div>
<div class="t m code" style="left:1214.5px;top:171.5px;height:52px;line-height:52px;"><span class="c">//</span></div>
<div class="t ln" style="left:1051.5px;top:224px;height:52px;line-height:52px;color:#606366;">2</div>
<div class="t m code" style="left:1214.5px;top:223.5px;height:52px;line-height:52px;"><span class="c">// Code generated by GoFrame CLI tool. DO NOT EDIT.</span></div>
<div class="t ln" style="left:1051.5px;top:276px;height:52px;line-height:52px;color:#606366;">3</div>
<div class="t m code" style="left:1214.5px;top:275.5px;height:52px;line-height:52px;"><span class="c">//</span></div>
<div class="t ln" style="left:1051.5px;top:328px;height:52px;line-height:52px;color:#606366;">4</div>
<div class="t ln" style="left:1051.5px;top:380px;height:52px;line-height:52px;color:#606366;">5</div>
<div class="t m code" style="left:1214.5px;top:379.5px;height:52px;line-height:52px;"><span class="k">package</span> <span class="p">entity</span></div>
<div class="t ln" style="left:1051.5px;top:432px;height:52px;line-height:52px;color:#606366;">6</div>
<div class="t ln" style="left:1051.5px;top:484px;height:52px;line-height:52px;color:#606366;">7</div>
<div class="t m code" style="left:1214.5px;top:483.5px;height:52px;line-height:52px;"><span class="k">import</span> <span style="color:#8C8C8C">...</span></div>
<div class="t ln" style="left:1051.5px;top:536px;height:52px;line-height:52px;color:#606366;">10</div>
<div class="t ln" style="left:1051.5px;top:588px;height:52px;line-height:52px;color:#606366;">11</div>
<div class="t m code" style="left:1214.5px;top:587.5px;height:52px;line-height:52px;"><span class="c">// </span><span class="dc">Category</span><span class="c"> is the golang structure for table category.</span></div>
<div class="t ln" style="left:1051.5px;top:640px;height:52px;line-height:52px;color:#606366;">12</div>
<div class="t m code" style="left:1214.5px;top:639.5px;height:52px;line-height:52px;"><span class="k">type</span> <span class="d">Category</span> <span class="k">struct</span> {</div>
<div class="t ln" style="left:1051.5px;top:692px;height:52px;line-height:52px;color:#606366;">13</div>
<div class="t m code" style="left:1214.5px;top:691.5px;height:52px;line-height:52px;">    Id          <span class="k">uint        </span><span class="g">`</span>json:<span class="g">"id"</span>          description:<span class="g">"</span><span class="cj">分类</span><span class="g">ID</span><span class="cj">，自增主键</span><span class="g">"`</span></div>
<div class="t ln" style="left:1051.5px;top:744px;height:52px;line-height:52px;color:#606366;">14</div>
<div class="t m code" style="left:1214.5px;top:743.5px;height:52px;line-height:52px;">    ContentType <span class="k">string      </span><span class="g">`</span>json:<span class="g">"contentType"</span> description:<span class="g">"</span><span class="cj">内容类型：</span><span class="g">topic, ask, article, reply</span><span class="g">"`</span></div>
<div class="t ln" style="left:1051.5px;top:796px;height:52px;line-height:52px;color:#606366;">15</div>
<div class="t m code" style="left:1214.5px;top:795.5px;height:52px;line-height:52px;">    Key         <span class="k">string      </span><span class="g">`</span>json:<span class="g">"key"</span>         description:<span class="g">"</span><span class="cj">栏目唯一键名，用于程序部分场景硬编码，一般不会用得到</span><span class="g">"`</span></div>
<div class="t ln" style="left:1051.5px;top:848px;height:52px;line-height:52px;color:#606366;">16</div>
<div class="t m code" style="left:1214.5px;top:847.5px;height:52px;line-height:52px;">    ParentId    <span class="k">uint        </span><span class="g">`</span>json:<span class="g">"parentId"</span>    description:<span class="g">"</span><span class="cj">父级分类</span><span class="g">ID</span><span class="cj">，用于层级管理</span><span class="g">"`</span></div>
<div class="t ln" style="left:1051.5px;top:900px;height:52px;line-height:52px;color:#606366;">17</div>
<div class="t m code" style="left:1214.5px;top:899.5px;height:52px;line-height:52px;">    UserId      <span class="k">uint        </span><span class="g">`</span>json:<span class="g">"userId"</span>      description:<span class="g">"</span><span class="cj">创建的用户</span><span class="g">ID</span><span class="g">"`</span></div>
<div class="t ln" style="left:1051.5px;top:952px;height:52px;line-height:52px;color:#606366;">18</div>
<div class="t m code" style="left:1214.5px;top:951.5px;height:52px;line-height:52px;">    Name        <span class="k">string      </span><span class="g">`</span>json:<span class="g">"name"</span>        description:<span class="g">"</span><span class="cj">分类名称</span><span class="g">"`</span></div>
<div class="t ln" style="left:1051.5px;top:1004px;height:52px;line-height:52px;color:#606366;">19</div>
<div class="t m code" style="left:1214.5px;top:1003.5px;height:52px;line-height:52px;">    Sort        <span class="k">uint        </span><span class="g">`</span>json:<span class="g">"sort"</span>        description:<span class="g">"</span><span class="cj">排序，数值越低越靠前，默认为添加时的时间戳，可用于置顶</span><span class="g">"`</span></div>
<div class="t ln" style="left:1051.5px;top:1056px;height:52px;line-height:52px;color:#606366;">20</div>
<div class="t m code" style="left:1214.5px;top:1055.5px;height:52px;line-height:52px;">    Thumb       <span class="k">string      </span><span class="g">`</span>json:<span class="g">"thumb"</span>       description:<span class="g">"</span><span class="cj">封面图</span><span class="g">"`</span></div>
<div class="t ln" style="left:1051.5px;top:1108px;height:52px;line-height:52px;color:#606366;">21</div>
<div class="t m code" style="left:1214.5px;top:1107.5px;height:52px;line-height:52px;">    Brief       <span class="k">string      </span><span class="g">`</span>json:<span class="g">"brief"</span>       description:<span class="g">"</span><span class="cj">简述</span><span class="g">"`</span></div>
<div class="t ln" style="left:1051.5px;top:1160px;height:52px;line-height:52px;color:#606366;">22</div>
<div class="t m code" style="left:1214.5px;top:1159.5px;height:52px;line-height:52px;">    Content     <span class="k">string      </span><span class="g">`</span>json:<span class="g">"content"</span>     description:<span class="g">"</span><span class="cj">详细介绍</span><span class="g">"`</span></div>
<div class="t ln" style="left:1051.5px;top:1212px;height:52px;line-height:52px;color:#606366;">23</div>
<div class="t m code" style="left:1214.5px;top:1211.5px;height:52px;line-height:52px;">    CreatedAt   <span style="position:relative;top:11px;left:-1px;font-size:40px;letter-spacing:-6px;line-height:0">*</span><span class="p">gtime</span>.<span class="y">Time</span> <span class="g">`</span>json:<span class="g">"createdAt"</span>   description:<span class="g">"</span><span class="cj">创建时间</span><span class="g">"`</span></div>
<div class="t ln" style="left:1051.5px;top:1264px;height:52px;line-height:52px;color:#606366;">24</div>
<div class="t m code" style="left:1214.5px;top:1263.5px;height:52px;line-height:52px;">    UpdatedAt   <span style="position:relative;top:11px;left:-1px;font-size:40px;letter-spacing:-6px;line-height:0">*</span><span class="p">gtime</span>.<span class="y">Time</span> <span class="g">`</span>json:<span class="g">"updatedAt"</span>   description:<span class="g">"</span><span class="cj">修改时间</span><span class="g">"`</span></div>
<div class="t ln" style="left:1051.5px;top:1316px;height:52px;line-height:52px;color:#606366;">25</div>
<div class="t m code" style="left:1214.5px;top:1315.5px;height:52px;line-height:52px;">}</div>
<div class="t ln" style="left:1051.5px;top:1368px;height:52px;line-height:52px;color:#606366;">26</div>
<div style="left:1270px;top:191px;width:1454px;height:3px;background:repeating-linear-gradient(90deg,#7E7E7E 0,#7E7E7E 14px,transparent 14px,transparent 18px);"></div>
<div style="left:1270px;top:197.5px;width:1454px;height:3px;background:repeating-linear-gradient(90deg,#7E7E7E 0,#7E7E7E 14px,transparent 14px,transparent 18px);"></div>
<div style="left:1270px;top:295px;width:1454px;height:3px;background:repeating-linear-gradient(90deg,#7E7E7E 0,#7E7E7E 14px,transparent 14px,transparent 18px);"></div>
<div style="left:1270px;top:301.5px;width:1454px;height:3px;background:repeating-linear-gradient(90deg,#7E7E7E 0,#7E7E7E 14px,transparent 14px,transparent 18px);"></div>
<svg style="left:1189px;top:185px;" width="22" height="27" viewBox="0 0 22 27"><path d="M1 1H21V15.5L11 25.5L1 15.5Z" fill="#313335" stroke="#5F6163" stroke-width="1.6"/><path d="M6 10.5H16" stroke="#5F6163" stroke-width="1.6"/></svg>
<svg style="left:1189px;top:284px;" width="22" height="27" viewBox="0 0 22 27"><path d="M1 26H21V11.5L11 1.5L1 11.5Z" fill="#313335" stroke="#5F6163" stroke-width="1.6"/><path d="M6 16.5H16" stroke="#5F6163" stroke-width="1.6"/></svg>
<svg style="left:1189px;top:497px;" width="22" height="22" viewBox="0 0 22 22"><rect x="1" y="1" width="20" height="20" fill="#313335" stroke="#5F6163" stroke-width="1.6"/><path d="M5.5 11H16.5M11 5.5V16.5" stroke="#5F6163" stroke-width="1.6"/></svg>
<svg style="left:1189px;top:653px;" width="22" height="27" viewBox="0 0 22 27"><path d="M1 1H21V15.5L11 25.5L1 15.5Z" fill="#313335" stroke="#5F6163" stroke-width="1.6"/><path d="M6 10.5H16" stroke="#5F6163" stroke-width="1.6"/></svg>
<svg style="left:1189px;top:1324px;" width="22" height="27" viewBox="0 0 22 27"><path d="M1 26H21V11.5L11 1.5L1 11.5Z" fill="#313335" stroke="#5F6163" stroke-width="1.6"/><path d="M6 16.5H16" stroke="#5F6163" stroke-width="1.6"/></svg>
<svg style="left:1231px;top:221px;" width="22" height="30" viewBox="0 0 22 30"><circle cx="11" cy="11" r="10.2" fill="#F0A732"/><path d="M5 17H17L15 22H7Z" fill="#F0A732"/><path d="M6 23.5H16M7 27H15" stroke="#D8D8D8" stroke-width="1.8"/></svg>
<div style="left:3494px;top:172px;width:44px;height:44px;background:#2A2A2A;border-radius:7px;"></div>
<svg style="left:3502px;top:183px;" width="28" height="22" viewBox="0 0 28 22"><path d="M2.5 12.5L10 19.5L25.5 4.5L23 2L10 14.8L5 10Z" fill="none" stroke="#499C54" stroke-width="1.8"/></svg>
<div style="left:3542px;top:114px;width:2px;height:1876px;background:#323232;"></div>
<div style="left:3544px;top:114px;width:40px;height:1876px;background:#3C3F41;"></div>
<svg style="left:3552px;top:134px;" width="22" height="26" viewBox="0 0 22 26"><ellipse cx="11" cy="4.3" rx="11" ry="4.3" fill="#AFB1B3"/><path d="M0 6.6C3 10.8 19 10.8 22 6.6V11.0C19 15.2 3 15.2 0 11.0Z" fill="#AFB1B3"/><path d="M0 12.2C3 16.4 19 16.4 22 12.2V16.6C19 20.799999999999997 3 20.799999999999997 0 16.6Z" fill="#AFB1B3"/><path d="M0 17.8C3 22.0 19 22.0 22 17.8V22.200000000000003C19 26.4 3 26.4 0 22.200000000000003Z" fill="#AFB1B3"/></svg>
<div class="t s rot" style="left:3578px;top:169px;height:30px;line-height:30px;color:#BBBBBB;">Database</div>
<svg style="left:3553.8px;top:1622px;" width="18.5" height="16" viewBox="0 0 18.5 16"><path d="M0 16V0H4.4L9.25 8L14.1 0H18.5V16H14.6V6.4L9.25 14.6L3.9 6.4V16Z" fill="#AFB1B3"/></svg>
<div class="t s rot" style="left:3578px;top:1652px;height:30px;line-height:30px;color:#BBBBBB;">make</div>
<svg style="left:3550px;top:1750px;" width="26" height="26" viewBox="0 0 26 26"><rect x="1.3" y="1.3" width="23.4" height="23.4" rx="1.5" fill="#3C3F41" stroke="#000" stroke-width="2.6"/><rect x="0.5" y="0.5" width="25" height="5" fill="#000"/><rect x="15.5" y="2" width="1.8" height="1.8" fill="#6a6a6a"/><rect x="18.7" y="2" width="1.8" height="1.8" fill="#6a6a6a"/><rect x="21.9" y="2" width="1.8" height="1.8" fill="#6a6a6a"/><text x="3.6" y="20.3" font-family="Liberation Sans, sans-serif" font-weight="bold" font-size="10.2" fill="#000" textLength="18.8" lengthAdjust="spacingAndGlyphs">/API</text></svg>
<div class="t s rot" style="left:3578px;top:1784px;height:30px;line-height:30px;color:#BBBBBB;">API Security Audit</div>
<div style="left:0px;top:1990px;width:3584px;height:2px;background:#323232;"></div>
<div style="left:0px;top:1992px;width:3584px;height:40px;background:#3C3F41;"></div>
<div style="left:0px;top:2032px;width:3584px;height:2px;background:#474949;"></div>
<svg style="left:62px;top:2001px;" width="19" height="25" viewBox="0 0 19 25"><circle cx="4.2" cy="4" r="3.9" fill="#AFB1B3"/><circle cx="4.2" cy="20.4" r="3.9" fill="#AFB1B3"/><circle cx="14.6" cy="8" r="3.9" fill="#AFB1B3"/><path d="M4.2 3V21M14.6 8C14.6 14.5 4.2 12 4.2 18" fill="none" stroke="#AFB1B3" stroke-width="3.4"/></svg>
<div class="t s" style="left:92.5px;top:1993px;height:40px;line-height:40px;">Git</div>
<svg style="left:164px;top:2002px;" width="16" height="20" viewBox="0 0 16 20"><path d="M0 0L16 10L0 20Z" fill="#AFB1B3"/></svg>
<div class="t s" style="left:195px;top:1993px;height:40px;line-height:40px;letter-spacing:-0.5px;">Run</div>
<svg style="left:274px;top:2002px;" width="20" height="20" viewBox="0 0 20 20"><path d="M0 2.4H4.2M7 2.4H20M0 10H4.2M7 10H20M0 17.6H4.2M7 17.6H20" stroke="#AFB1B3" stroke-width="3.8"/></svg>
<div class="t s" style="left:305px;top:1993px;height:40px;line-height:40px;letter-spacing:-0.5px;">TODO</div>
<svg style="left:409px;top:2002px;" width="21" height="21" viewBox="0 0 21 21"><circle cx="10.5" cy="10.5" r="10.3" fill="#AFB1B3"/><rect x="9" y="4.5" width="3" height="7.5" fill="#3C3F41"/><rect x="9" y="14" width="3" height="3" fill="#3C3F41"/></svg>
<div class="t s" style="left:441px;top:1993px;height:40px;line-height:40px;">Problems</div>
<svg style="left:580px;top:2002px;" width="22" height="20" viewBox="0 0 22 20"><rect width="22" height="20" fill="#AFB1B3"/><path d="M3.5 5L8.5 9.5L3.5 14M10 15H17" fill="none" stroke="#3C3F41" stroke-width="2"/></svg>
<div class="t s" style="left:612.5px;top:1993px;height:40px;line-height:40px;">Terminal</div>
<svg style="left:3152px;top:2000px;" width="26" height="26" viewBox="0 0 26 26"><path d="M13 1.7A11.3 11.3 0 1 0 13 24.3H24.3V13A11.3 11.3 0 0 0 13 1.7Z" fill="none" stroke="#AFB1B3" stroke-width="3"/></svg>
<div class="t s" style="left:3187px;top:1993px;height:40px;line-height:40px;letter-spacing:0px;">Event Log</div>
<svg style="left:3330px;top:2000px;" width="26" height="26" viewBox="0 0 26 26"><rect x="1.3" y="1.3" width="23.4" height="23.4" rx="1.5" fill="#3C3F41" stroke="#000" stroke-width="2.6"/><rect x="0.5" y="0.5" width="25" height="5" fill="#000"/><rect x="15.5" y="2" width="1.8" height="1.8" fill="#6a6a6a"/><rect x="18.7" y="2" width="1.8" height="1.8" fill="#6a6a6a"/><rect x="21.9" y="2" width="1.8" height="1.8" fill="#6a6a6a"/><text x="3.6" y="20.3" font-family="Liberation Sans, sans-serif" font-weight="bold" font-size="10.2" fill="#000" textLength="18.8" lengthAdjust="spacingAndGlyphs">/API</text></svg>
<div class="t s" style="left:3365px;top:1993px;height:40px;line-height:40px;">Audit Problems</div>
<svg style="left:10px;top:2040px;" width="30" height="30" viewBox="0 0 30 30"><rect x="6.9" y="3.1" width="18.3" height="18.2" fill="none" stroke="#AFB1B3" stroke-width="2.1"/><path d="M2.95 6V24.95H22.1" fill="none" stroke="#AFB1B3" stroke-width="2.1"/></svg>
<div class="t s" style="left:62px;top:2034.5px;height:40px;line-height:40px;letter-spacing:0.45px;">3 elements selected</div>
<div class="t s" style="left:3114px;top:2034.5px;height:40px;line-height:40px;letter-spacing:-1.4px;">1:1</div>
<div class="t s" style="left:3165px;top:2034.5px;height:40px;line-height:40px;letter-spacing:-0.75px;">LF</div>
<div class="t s" style="left:3213px;top:2034.5px;height:40px;line-height:40px;">UTF-8</div>
<div class="t s" style="left:3303px;top:2034.5px;height:40px;line-height:40px;letter-spacing:0.05px;">Tab</div>
<svg style="left:3366px;top:2039px;" width="20" height="30" viewBox="0 0 20 30"><circle cx="4" cy="4" r="3.8" fill="#AFB1B3"/><circle cx="4" cy="26" r="3.8" fill="#AFB1B3"/><circle cx="16" cy="6.5" r="3.8" fill="#AFB1B3"/><path d="M4 4V26M16 7C16 15.5 4 13 4 21" fill="none" stroke="#AFB1B3" stroke-width="3.2"/></svg>
<div class="t s" style="left:3396.5px;top:2034.5px;height:40px;line-height:40px;">master</div>
<svg style="left:3484px;top:2040px;" width="26" height="26" viewBox="0 0 26 26"><path d="M3.3 12.5V8A4.7 4.7 0 0 1 12.7 8V12.5" fill="none" stroke="#AFB1B3" stroke-width="3"/><rect x="8" y="12" width="16" height="12" fill="#AFB1B3"/></svg>
<svg style="left:3532px;top:2039px;" width="34" height="32" viewBox="0 0 34 32"><path d="M7 21C3.2 21 0.8 18.4 0.8 15.4C0.8 12.6 2.8 10.4 5.6 10C6 5 9.8 1.4 14.8 1.4C19 1.4 22.4 4.2 23.4 8C27 8.4 29.8 11 29.8 14.6C29.8 16 29.4 17.2 28.6 18.2L22 15L17 21Z" fill="#AFB1B3"/><text x="15" y="16" font-family="Liberation Sans, sans-serif" font-weight="bold" font-size="15" text-anchor="middle" fill="#3C3F41">?</text><path fill-rule="evenodd" d="M23.5 19.9L23.9 17.7L27.1 17.7L27.5 19.9L28.4 20.5L30.6 19.7L32.2 22.5L30.5 24.0L30.5 25.0L32.2 26.5L30.6 29.3L28.4 28.5L27.5 29.1L27.1 31.3L23.9 31.3L23.5 29.1L22.6 28.5L20.4 29.3L18.8 26.5L20.5 25.0L20.5 24.0L18.8 22.5L20.4 19.7L22.6 20.5ZM23.3 24.5a2.2 2.2 0 1 0 4.4 0a2.2 2.2 0 1 0 -4.4 0Z" fill="#AFB1B3" stroke="#AFB1B3" stroke-width="0.8" stroke-linejoin="round"/></svg>
</div></body></html>
